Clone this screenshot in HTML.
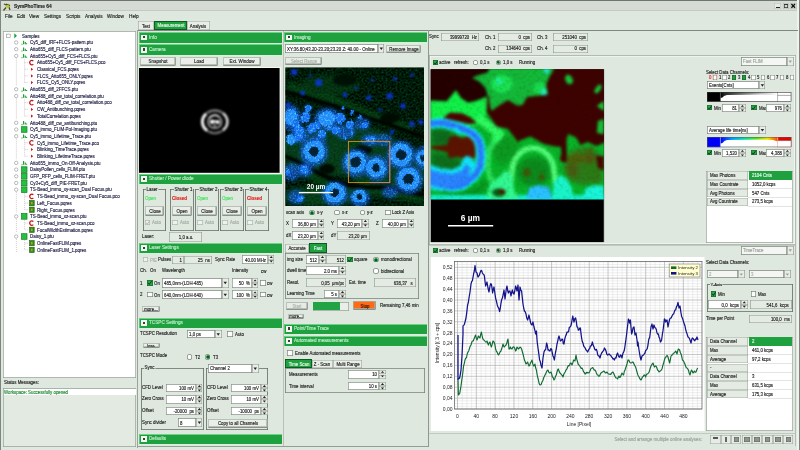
<!DOCTYPE html>
<html><head><meta charset="utf-8"><title>SymPhoTime 64</title>
<style>
html,body{margin:0;padding:0;background:#dfe8df;}
body{width:800px;height:450px;overflow:hidden;position:relative;font-family:"Liberation Sans",sans-serif;}
#w{position:absolute;left:0;top:0;width:800px;height:450px;overflow:hidden;filter:blur(0.35px);}
.a{position:absolute;}
.t{white-space:nowrap;overflow:visible;transform:scaleX(0.95);-webkit-text-stroke:0.14px currentColor;}
svg{overflow:visible;}
</style></head><body><div id="w">
<div class="a" style="left:0.0px;top:0.0px;width:800.0px;height:450.0px;background:#dfe8df;"></div>
<div class="a" style="left:0.0px;top:0.0px;width:800.0px;height:10.4px;background:#d6dcd5;"></div>
<div class="a" style="left:0.0px;top:0.0px;width:800.0px;height:1.0px;background:#6d756d;"></div>
<div class="a" style="left:0.0px;top:10.2px;width:800.0px;height:0.8px;background:#c3cac2;"></div>
<div class="a" style="left:0.0px;top:0.0px;width:1.0px;height:450.0px;background:#7d857d;"></div>
<div class="a" style="left:797.0px;top:0.0px;width:1.6px;height:450.0px;background:#eef3ee;"></div>
<div class="a" style="left:798.8px;top:0.0px;width:1.2px;height:450.0px;background:#7d857d;"></div>
<div class="a" style="left:774.4px;top:2.8px;width:6.8px;height:5.8px;background:#e4e9e3;box-shadow:inset 0 0 0 0.5px #b4bbb3;"></div>
<div class="a" style="left:775.6px;top:7.0px;width:4.4px;height:1.0px;background:#222;"></div>
<div class="a" style="left:782.8px;top:2.8px;width:6.2px;height:5.8px;background:#d4dad3;box-shadow:inset 0 0 0 0.5px #b4bbb3;"></div>
<div class="a" style="left:783.8px;top:3.8px;width:4.4px;height:3.8px;box-shadow:inset 0 0 0 0.7px #333;"></div>
<div class="a" style="left:783.8px;top:3.8px;width:4.4px;height:1.2px;background:#333;"></div>
<div class="a" style="left:790.4px;top:2.8px;width:6.4px;height:5.8px;background:#d4dad3;box-shadow:inset 0 0 0 0.5px #b4bbb3;"></div>
<svg class="a" style="left:790.4px;top:2.8px" width="6.4" height="5.8"><path d="M1.4 1 L5 4.8 M5 1 L1.4 4.8" stroke="#111" stroke-width="1.3"/></svg>
<svg class="a" style="left:2.5px;top:2.5px" width="8" height="8"><rect width="8" height="8" fill="#c8cf5a" opacity="0.0"/><path d="M0.5 7.5 L3 4.5 M1 1 L5.5 3 L7 7 M3 1.2 L7 2.5" stroke="#4a5010" stroke-width="1.3" fill="none"/><circle cx="4.6" cy="3.4" r="1.7" fill="#bcc83a"/></svg>
<div class="a t" style="top:2.8px;height:6.7px;line-height:6.7px;font-size:5.16px;color:#222;font-weight:bold;left:13.6px;transform-origin:0 50%;">SymPhoTime 64</div>
<div class="a t" style="top:13.2px;height:6.5px;line-height:6.5px;font-size:4.99px;color:#1c1c1c;left:5.0px;transform-origin:0 50%;">File</div>
<div class="a t" style="top:13.2px;height:6.5px;line-height:6.5px;font-size:4.99px;color:#1c1c1c;left:17.0px;transform-origin:0 50%;">Edit</div>
<div class="a t" style="top:13.2px;height:6.5px;line-height:6.5px;font-size:4.99px;color:#1c1c1c;left:29.0px;transform-origin:0 50%;">View</div>
<div class="a t" style="top:13.2px;height:6.5px;line-height:6.5px;font-size:4.99px;color:#1c1c1c;left:44.0px;transform-origin:0 50%;">Settings</div>
<div class="a t" style="top:13.2px;height:6.5px;line-height:6.5px;font-size:4.99px;color:#1c1c1c;left:66.0px;transform-origin:0 50%;">Scripts</div>
<div class="a t" style="top:13.2px;height:6.5px;line-height:6.5px;font-size:4.99px;color:#1c1c1c;left:84.5px;transform-origin:0 50%;">Analysis</div>
<div class="a t" style="top:13.2px;height:6.5px;line-height:6.5px;font-size:4.99px;color:#1c1c1c;left:106.5px;transform-origin:0 50%;">Window</div>
<div class="a t" style="top:13.2px;height:6.5px;line-height:6.5px;font-size:4.99px;color:#1c1c1c;left:129.0px;transform-origin:0 50%;">Help</div>
<div class="a" style="left:3.0px;top:31.0px;width:133.3px;height:347.3px;background:#ffffff;box-shadow:inset 0 0 0 0.7px #98a198;"></div>
<div class="a t" style="top:33.5px;height:6.1px;line-height:6.1px;font-size:4.73px;color:#1a1a40;left:21.8px;transform-origin:0 50%;">Samples</div>
<div class="a t" style="top:40.2px;height:6.1px;line-height:6.1px;font-size:4.73px;color:#1a1a40;left:29.6px;transform-origin:0 50%;">Cy5_diff_IRF+FLCS-pattern.ptu</div>
<div class="a t" style="top:46.9px;height:6.1px;line-height:6.1px;font-size:4.73px;color:#1a1a40;left:29.6px;transform-origin:0 50%;">Atto655_diff_FLCS-pattern.ptu</div>
<div class="a t" style="top:53.6px;height:6.1px;line-height:6.1px;font-size:4.73px;color:#1a1a40;left:29.6px;transform-origin:0 50%;">Atto655+Cy5_diff_FCS+FLCS.ptu</div>
<div class="a t" style="top:60.3px;height:6.1px;line-height:6.1px;font-size:4.73px;color:#1a1a40;left:37.2px;transform-origin:0 50%;">Atto655+Cy5_diff_FCS+FLCS.pco</div>
<div class="a t" style="top:67.0px;height:6.1px;line-height:6.1px;font-size:4.73px;color:#1a1a40;left:37.2px;transform-origin:0 50%;">Classical_FCS.pqres</div>
<div class="a t" style="top:73.7px;height:6.1px;line-height:6.1px;font-size:4.73px;color:#1a1a40;left:37.2px;transform-origin:0 50%;">FLCS_Atto655_ONLY.pqres</div>
<div class="a t" style="top:80.4px;height:6.1px;line-height:6.1px;font-size:4.73px;color:#1a1a40;left:37.2px;transform-origin:0 50%;">FLCS_Cy5_ONLY.pqres</div>
<div class="a t" style="top:87.0px;height:6.1px;line-height:6.1px;font-size:4.73px;color:#1a1a40;left:29.6px;transform-origin:0 50%;">Atto655_diff_2FFCS.ptu</div>
<div class="a t" style="top:93.7px;height:6.1px;line-height:6.1px;font-size:4.73px;color:#1a1a40;left:29.6px;transform-origin:0 50%;">Atto488_diff_cw_total_correlation.ptu</div>
<div class="a t" style="top:100.4px;height:6.1px;line-height:6.1px;font-size:4.73px;color:#1a1a40;left:37.2px;transform-origin:0 50%;">Atto488_diff_cw_total_correlation.pco</div>
<div class="a t" style="top:107.1px;height:6.1px;line-height:6.1px;font-size:4.73px;color:#1a1a40;left:37.2px;transform-origin:0 50%;">CW_Antibunching.pqres</div>
<div class="a t" style="top:113.8px;height:6.1px;line-height:6.1px;font-size:4.73px;color:#1a1a40;left:37.2px;transform-origin:0 50%;">TotalCorrelation.pqres</div>
<div class="a t" style="top:120.5px;height:6.1px;line-height:6.1px;font-size:4.73px;color:#1a1a40;left:29.6px;transform-origin:0 50%;">Atto488_diff_cw_antibunching.ptu</div>
<div class="a t" style="top:127.2px;height:6.1px;line-height:6.1px;font-size:4.73px;color:#1a1a40;left:29.6px;transform-origin:0 50%;">Cy5_immo_FLIM-Pol-Imaging.ptu</div>
<div class="a t" style="top:133.9px;height:6.1px;line-height:6.1px;font-size:4.73px;color:#1a1a40;left:29.6px;transform-origin:0 50%;">Cy5_immo_Lifetime_Trace.ptu</div>
<div class="a t" style="top:140.6px;height:6.1px;line-height:6.1px;font-size:4.73px;color:#1a1a40;left:37.2px;transform-origin:0 50%;">Cy5_immo_Lifetime_Trace.pco</div>
<div class="a t" style="top:147.3px;height:6.1px;line-height:6.1px;font-size:4.73px;color:#1a1a40;left:37.2px;transform-origin:0 50%;">Blinking_TimeTrace.pqres</div>
<div class="a t" style="top:153.9px;height:6.1px;line-height:6.1px;font-size:4.73px;color:#1a1a40;left:37.2px;transform-origin:0 50%;">Blinking_LifetimeTrace.pqres</div>
<div class="a t" style="top:160.6px;height:6.1px;line-height:6.1px;font-size:4.73px;color:#1a1a40;left:29.6px;transform-origin:0 50%;">Atto655_immo_On-Off-Analysis.ptu</div>
<div class="a t" style="top:167.3px;height:6.1px;line-height:6.1px;font-size:4.73px;color:#1a1a40;left:29.6px;transform-origin:0 50%;">DaisyPollen_cells_FLIM.ptu</div>
<div class="a t" style="top:174.0px;height:6.1px;line-height:6.1px;font-size:4.73px;color:#1a1a40;left:29.6px;transform-origin:0 50%;">GFP_RFP_cells_FLIM-FRET.ptu</div>
<div class="a t" style="top:180.7px;height:6.1px;line-height:6.1px;font-size:4.73px;color:#1a1a40;left:29.6px;transform-origin:0 50%;">Cy3+Cy5_diff_PIE-FRET.ptu</div>
<div class="a t" style="top:187.4px;height:6.1px;line-height:6.1px;font-size:4.73px;color:#1a1a40;left:29.6px;transform-origin:0 50%;">TS-Bead_immo_xy-scan_Dual Focus.ptu</div>
<div class="a t" style="top:194.1px;height:6.1px;line-height:6.1px;font-size:4.73px;color:#1a1a40;left:37.2px;transform-origin:0 50%;">TS-Bead_immo_xy-scan_Dual Focus.pco</div>
<div class="a t" style="top:200.8px;height:6.1px;line-height:6.1px;font-size:4.73px;color:#1a1a40;left:37.2px;transform-origin:0 50%;">Left_Focus.pqres</div>
<div class="a t" style="top:207.5px;height:6.1px;line-height:6.1px;font-size:4.73px;color:#1a1a40;left:37.2px;transform-origin:0 50%;">Right_Focus.pqres</div>
<div class="a t" style="top:214.2px;height:6.1px;line-height:6.1px;font-size:4.73px;color:#1a1a40;left:29.6px;transform-origin:0 50%;">TS-Bead_immo_xz-scan.ptu</div>
<div class="a t" style="top:220.8px;height:6.1px;line-height:6.1px;font-size:4.73px;color:#1a1a40;left:37.2px;transform-origin:0 50%;">TS-Bead_immo_xz-scan.pco</div>
<div class="a t" style="top:227.5px;height:6.1px;line-height:6.1px;font-size:4.73px;color:#1a1a40;left:37.2px;transform-origin:0 50%;">FocalWidthEstimation.pqres</div>
<div class="a t" style="top:234.2px;height:6.1px;line-height:6.1px;font-size:4.73px;color:#1a1a40;left:29.6px;transform-origin:0 50%;">Daisy_1.ptu</div>
<div class="a t" style="top:240.9px;height:6.1px;line-height:6.1px;font-size:4.73px;color:#1a1a40;left:37.2px;transform-origin:0 50%;">OnlineFastFLIM.pqres</div>
<div class="a t" style="top:247.6px;height:6.1px;line-height:6.1px;font-size:4.73px;color:#1a1a40;left:37.2px;transform-origin:0 50%;">OnlineFastFLIM_1.pqres</div>
<svg class="a" style="left:0;top:0" width="140" height="260"><rect x="6.6" y="34.1" width="3.6" height="3.4" fill="#fff" stroke="#8a908a" stroke-width="0.6"/><path d="M14.3 33.2 L16.9 35.8 L14.3 38.4Z" fill="#18a034"/><circle cx="16.2" cy="42.5" r="1.7" fill="#fff" stroke="#8a908a" stroke-width="0.6"/><path d="M21.5 44.3 h1 M23.6 44.3 v-3.6 M25.3 44.3 v-2.2 M26.6 44.3 v-1" stroke="#1c9a30" stroke-width="1.1" fill="none"/><circle cx="16.2" cy="49.2" r="1.7" fill="#fff" stroke="#8a908a" stroke-width="0.6"/><path d="M21.5 51.0 h1 M23.6 51.0 v-3.6 M25.3 51.0 v-2.2 M26.6 51.0 v-1" stroke="#1c9a30" stroke-width="1.1" fill="none"/><circle cx="16.2" cy="55.9" r="1.7" fill="#fff" stroke="#8a908a" stroke-width="0.6"/><path d="M21.5 57.7 h1 M23.6 57.7 v-3.6 M25.3 57.7 v-2.2 M26.6 57.7 v-1" stroke="#1c9a30" stroke-width="1.1" fill="none"/><path d="M33.3 61.1 a2 2.3 0 1 0 0 3" stroke="#c41818" stroke-width="1.2" fill="none"/><path d="M31 67.7 L33.2 69.2 L31 70.8Z" fill="#d01818"/><path d="M31 74.3 L33.2 75.9 L31 77.5Z" fill="#d01818"/><path d="M31 81.0 L33.2 82.6 L31 84.2Z" fill="#d01818"/><circle cx="16.2" cy="89.3" r="1.7" fill="#fff" stroke="#8a908a" stroke-width="0.6"/><path d="M21.5 91.1 h1 M23.6 91.1 v-3.6 M25.3 91.1 v-2.2 M26.6 91.1 v-1" stroke="#1c9a30" stroke-width="1.1" fill="none"/><circle cx="16.2" cy="96.0" r="1.7" fill="#fff" stroke="#8a908a" stroke-width="0.6"/><path d="M21.5 97.8 h1 M23.6 97.8 v-3.6 M25.3 97.8 v-2.2 M26.6 97.8 v-1" stroke="#1c9a30" stroke-width="1.1" fill="none"/><path d="M33.3 101.2 a2 2.3 0 1 0 0 3" stroke="#c41818" stroke-width="1.2" fill="none"/><path d="M31 107.8 L33.2 109.4 L31 111.0Z" fill="#d01818"/><path d="M31 114.5 L33.2 116.1 L31 117.7Z" fill="#d01818"/><circle cx="16.2" cy="122.8" r="1.7" fill="#fff" stroke="#8a908a" stroke-width="0.6"/><path d="M21.5 124.6 h1 M23.6 124.6 v-3.6 M25.3 124.6 v-2.2 M26.6 124.6 v-1" stroke="#1c9a30" stroke-width="1.1" fill="none"/><circle cx="16.2" cy="129.5" r="1.7" fill="#fff" stroke="#8a908a" stroke-width="0.6"/><rect x="21.6" y="126.7" width="5.4" height="5.6" fill="#22c23c" stroke="#157a28" stroke-width="0.7"/><circle cx="16.2" cy="136.2" r="1.7" fill="#fff" stroke="#8a908a" stroke-width="0.6"/><path d="M21.5 138.0 h1 M23.6 138.0 v-3.6 M25.3 138.0 v-2.2 M26.6 138.0 v-1" stroke="#1c9a30" stroke-width="1.1" fill="none"/><path d="M33.3 141.3 a2 2.3 0 1 0 0 3" stroke="#c41818" stroke-width="1.2" fill="none"/><path d="M31 147.9 L33.2 149.5 L31 151.1Z" fill="#d01818"/><path d="M31 154.6 L33.2 156.2 L31 157.8Z" fill="#d01818"/><circle cx="16.2" cy="162.9" r="1.7" fill="#fff" stroke="#8a908a" stroke-width="0.6"/><path d="M21.5 164.7 h1 M23.6 164.7 v-3.6 M25.3 164.7 v-2.2 M26.6 164.7 v-1" stroke="#1c9a30" stroke-width="1.1" fill="none"/><circle cx="16.2" cy="169.6" r="1.7" fill="#fff" stroke="#8a908a" stroke-width="0.6"/><rect x="21.6" y="166.8" width="5.4" height="5.6" fill="#22c23c" stroke="#157a28" stroke-width="0.7"/><circle cx="16.2" cy="176.3" r="1.7" fill="#fff" stroke="#8a908a" stroke-width="0.6"/><rect x="21.6" y="173.5" width="5.4" height="5.6" fill="#22c23c" stroke="#157a28" stroke-width="0.7"/><circle cx="16.2" cy="183.0" r="1.7" fill="#fff" stroke="#8a908a" stroke-width="0.6"/><rect x="21.6" y="180.2" width="5.4" height="5.6" fill="#22c23c" stroke="#157a28" stroke-width="0.7"/><circle cx="16.2" cy="189.7" r="1.7" fill="#fff" stroke="#8a908a" stroke-width="0.6"/><rect x="21.6" y="186.9" width="5.4" height="5.6" fill="#22c23c" stroke="#157a28" stroke-width="0.7"/><path d="M33.3 194.9 a2 2.3 0 1 0 0 3" stroke="#c41818" stroke-width="1.2" fill="none"/><rect x="29.6" y="200.5" width="4.6" height="5.2" fill="#2f8f1a" stroke="#1d5a10" stroke-width="0.6"/><rect x="31" y="201.9" width="1.6" height="2.4" fill="#b8a020"/><rect x="29.6" y="207.1" width="4.6" height="5.2" fill="#2f8f1a" stroke="#1d5a10" stroke-width="0.6"/><rect x="31" y="208.5" width="1.6" height="2.4" fill="#b8a020"/><circle cx="16.2" cy="216.4" r="1.7" fill="#fff" stroke="#8a908a" stroke-width="0.6"/><rect x="21.6" y="213.6" width="5.4" height="5.6" fill="#22c23c" stroke="#157a28" stroke-width="0.7"/><path d="M33.3 221.6 a2 2.3 0 1 0 0 3" stroke="#c41818" stroke-width="1.2" fill="none"/><rect x="29.6" y="227.2" width="4.6" height="5.2" fill="#2f8f1a" stroke="#1d5a10" stroke-width="0.6"/><rect x="31" y="228.6" width="1.6" height="2.4" fill="#b8a020"/><circle cx="16.2" cy="236.5" r="1.7" fill="#fff" stroke="#8a908a" stroke-width="0.6"/><rect x="21.6" y="233.7" width="5.4" height="5.6" fill="#22c23c" stroke="#157a28" stroke-width="0.7"/><rect x="29.6" y="240.6" width="4.6" height="5.2" fill="#2f8f1a" stroke="#1d5a10" stroke-width="0.6"/><rect x="31" y="242.0" width="1.6" height="2.4" fill="#b8a020"/><rect x="29.6" y="247.3" width="4.6" height="5.2" fill="#2f8f1a" stroke="#1d5a10" stroke-width="0.6"/><rect x="31" y="248.7" width="1.6" height="2.4" fill="#b8a020"/><path d="M16.4 58.4 V85.6" stroke="#b8a8a8" stroke-width="0.6" stroke-dasharray="1 1"/><path d="M24.6 59.4 V82.6" stroke="#b8a8a8" stroke-width="0.6" stroke-dasharray="1 1"/><path d="M24.6 62.6 H28.2" stroke="#b8a8a8" stroke-width="0.6" stroke-dasharray="1 1"/><path d="M24.6 69.2 H28.2" stroke="#b8a8a8" stroke-width="0.6" stroke-dasharray="1 1"/><path d="M24.6 75.9 H28.2" stroke="#b8a8a8" stroke-width="0.6" stroke-dasharray="1 1"/><path d="M24.6 82.6 H28.2" stroke="#b8a8a8" stroke-width="0.6" stroke-dasharray="1 1"/><path d="M16.4 98.5 V119.1" stroke="#b8a8a8" stroke-width="0.6" stroke-dasharray="1 1"/><path d="M24.6 99.5 V116.1" stroke="#b8a8a8" stroke-width="0.6" stroke-dasharray="1 1"/><path d="M24.6 102.7 H28.2" stroke="#b8a8a8" stroke-width="0.6" stroke-dasharray="1 1"/><path d="M24.6 109.4 H28.2" stroke="#b8a8a8" stroke-width="0.6" stroke-dasharray="1 1"/><path d="M24.6 116.1 H28.2" stroke="#b8a8a8" stroke-width="0.6" stroke-dasharray="1 1"/><path d="M16.4 138.7 V159.2" stroke="#b8a8a8" stroke-width="0.6" stroke-dasharray="1 1"/><path d="M24.6 139.7 V156.2" stroke="#b8a8a8" stroke-width="0.6" stroke-dasharray="1 1"/><path d="M24.6 142.8 H28.2" stroke="#b8a8a8" stroke-width="0.6" stroke-dasharray="1 1"/><path d="M24.6 149.5 H28.2" stroke="#b8a8a8" stroke-width="0.6" stroke-dasharray="1 1"/><path d="M24.6 156.2 H28.2" stroke="#b8a8a8" stroke-width="0.6" stroke-dasharray="1 1"/><path d="M16.4 192.2 V212.7" stroke="#b8a8a8" stroke-width="0.6" stroke-dasharray="1 1"/><path d="M24.6 193.2 V209.7" stroke="#b8a8a8" stroke-width="0.6" stroke-dasharray="1 1"/><path d="M24.6 196.4 H28.2" stroke="#b8a8a8" stroke-width="0.6" stroke-dasharray="1 1"/><path d="M24.6 203.1 H28.2" stroke="#b8a8a8" stroke-width="0.6" stroke-dasharray="1 1"/><path d="M24.6 209.7 H28.2" stroke="#b8a8a8" stroke-width="0.6" stroke-dasharray="1 1"/><path d="M16.4 218.9 V232.8" stroke="#b8a8a8" stroke-width="0.6" stroke-dasharray="1 1"/><path d="M24.6 219.9 V229.8" stroke="#b8a8a8" stroke-width="0.6" stroke-dasharray="1 1"/><path d="M24.6 223.1 H28.2" stroke="#b8a8a8" stroke-width="0.6" stroke-dasharray="1 1"/><path d="M24.6 229.8 H28.2" stroke="#b8a8a8" stroke-width="0.6" stroke-dasharray="1 1"/><path d="M16.4 239.0 V252.9" stroke="#b8a8a8" stroke-width="0.6" stroke-dasharray="1 1"/><path d="M24.6 240.0 V249.9" stroke="#b8a8a8" stroke-width="0.6" stroke-dasharray="1 1"/><path d="M24.6 243.2 H28.2" stroke="#b8a8a8" stroke-width="0.6" stroke-dasharray="1 1"/><path d="M24.6 249.9 H28.2" stroke="#b8a8a8" stroke-width="0.6" stroke-dasharray="1 1"/></svg>
<div class="a t" style="top:380.3px;height:6.0px;line-height:6.0px;font-size:4.64px;color:#1c1c1c;left:3.6px;transform-origin:0 50%;">Status Messages:</div>
<div class="a" style="left:3.0px;top:388.0px;width:133.3px;height:59.0px;background:#e2eae2;box-shadow:inset 0 0 0 0.7px #98a198;"></div>
<div class="a" style="left:3.7px;top:388.8px;width:131.9px;height:6.5px;background:#ffffff;"></div>
<div class="a t" style="top:389.8px;height:6.0px;line-height:6.0px;font-size:4.59px;color:#1c8a30;left:4.2px;transform-origin:0 50%;">Workspace: Successfully opened</div>
<div class="a" style="left:137.3px;top:30.0px;width:0.8px;height:418.0px;background:#9aa39a;"></div>
<div class="a" style="left:137.5px;top:29.5px;width:660.0px;height:1.2px;background:#7f887f;"></div>
<div class="a" style="left:138.2px;top:21.2px;width:16.0px;height:8.6px;background:#e9efe8;box-shadow:inset 0 0 0 0.6px #9aa39a;"></div>
<div class="a t" style="top:23.5px;height:6.0px;line-height:6.0px;font-size:4.64px;color:#1c1c1c;left:46.2px;width:200px;text-align:center;transform-origin:50% 50%;">Test</div>
<div class="a" style="left:154.4px;top:20.8px;width:32.6px;height:9.4px;background:#1fa13f;box-shadow:inset 0 0 0 0.9px #0f5a22;"></div>
<div class="a t" style="top:23.3px;height:6.0px;line-height:6.0px;font-size:4.64px;color:#e8f8ec;left:70.7px;width:200px;text-align:center;transform-origin:50% 50%;">Measurement</div>
<div class="a" style="left:187.2px;top:21.2px;width:22.4px;height:8.6px;background:#e9efe8;box-shadow:inset 0 0 0 0.6px #9aa39a;"></div>
<div class="a t" style="top:23.5px;height:6.0px;line-height:6.0px;font-size:4.64px;color:#1c1c1c;left:98.4px;width:200px;text-align:center;transform-origin:50% 50%;">Analysis</div>
<div class="a" style="left:138.5px;top:32.3px;width:143.3px;height:10.3px;background:#1fa13f;border-top:0.8px solid #6fd088;border-left:0.7px solid #5fc878;box-sizing:border-box;"></div>
<div class="a" style="left:138.5px;top:42.6px;width:143.3px;height:1.2px;background:#d4f2da;"></div>
<div class="a" style="left:140.9px;top:34.6px;width:5.8px;height:5.8px;background:#f4f8f4;"></div>
<div class="a" style="left:142.7px;top:36.1px;width:2.2px;height:2.2px;background:#3a3f3a;"></div>
<div class="a t" style="top:34.8px;height:6.4px;line-height:6.4px;font-size:4.9px;color:#c0eecb;left:148.5px;transform-origin:0 50%;">Info</div>
<div class="a" style="left:138.5px;top:44.3px;width:143.3px;height:10.7px;background:#1fa13f;border-top:0.8px solid #6fd088;border-left:0.7px solid #5fc878;box-sizing:border-box;"></div>
<div class="a" style="left:138.5px;top:55.0px;width:143.3px;height:1.2px;background:#d4f2da;"></div>
<div class="a" style="left:140.9px;top:46.9px;width:5.8px;height:5.8px;background:#f4f8f4;"></div>
<div class="a" style="left:142.7px;top:48.4px;width:2.2px;height:2.2px;background:#3a3f3a;"></div>
<div class="a t" style="top:47.0px;height:6.4px;line-height:6.4px;font-size:4.9px;color:#c0eecb;left:148.5px;transform-origin:0 50%;">Camera</div>
<div class="a" style="left:139.6px;top:57.0px;width:36.6px;height:9.2px;background:#e9efe8;box-shadow:inset 0 0 0 0.7px #a7b0a7;border-radius:1.2px;border-bottom:0.8px solid #8a938a;border-right:0.8px solid #98a198;box-sizing:border-box;"></div>
<div class="a t" style="top:59.3px;height:6.1px;line-height:6.1px;font-size:4.73px;color:#1c1c1c;left:57.9px;width:200px;text-align:center;transform-origin:50% 50%;">Snapshot</div>
<div class="a" style="left:180.4px;top:57.0px;width:37.8px;height:9.2px;background:#e9efe8;box-shadow:inset 0 0 0 0.7px #a7b0a7;border-radius:1.2px;border-bottom:0.8px solid #8a938a;border-right:0.8px solid #98a198;box-sizing:border-box;"></div>
<div class="a t" style="top:59.3px;height:6.1px;line-height:6.1px;font-size:4.73px;color:#1c1c1c;left:99.3px;width:200px;text-align:center;transform-origin:50% 50%;">Load</div>
<div class="a" style="left:223.0px;top:57.0px;width:38.2px;height:9.2px;background:#e9efe8;box-shadow:inset 0 0 0 0.7px #a7b0a7;border-radius:1.2px;border-bottom:0.8px solid #8a938a;border-right:0.8px solid #98a198;box-sizing:border-box;"></div>
<div class="a t" style="top:59.3px;height:6.1px;line-height:6.1px;font-size:4.73px;color:#1c1c1c;left:142.1px;width:200px;text-align:center;transform-origin:50% 50%;">Ext. Window</div>
<div class="a" style="left:138.8px;top:67.2px;width:142.4px;height:106.4px;background:#f6faf6;"></div>
<svg class="a" style="left:139.2px;top:67.6px" width="140.6" height="104.8" viewBox="0 0 140.6 104.8">
<defs><filter color-interpolation-filters="sRGB" id="cb" x="-30%" y="-30%" width="160%" height="160%"><feGaussianBlur stdDeviation="0.8"/></filter></defs>
<rect width="140.6" height="104.8" fill="#000"/>
<g filter="url(#cb)" fill="none" transform="translate(75.8,53.8)">
<ellipse rx="12.8" ry="11.5" stroke="#4a4a4a" stroke-width="2.4"/>
<path d="M-8.5 -8 A11.8 10.8 0 0 0 -7.5 8.8" stroke="#ffffff" stroke-width="2.8"/>
<path d="M8 -8.6 A11.8 10.8 0 0 1 8 8.4" stroke="#e4e4e4" stroke-width="2.4"/>
<path d="M-7 -8.8 A11 10 0 0 1 7 -9" stroke="#8a8a8a" stroke-width="1.6"/>
<path d="M-6 9.4 A11 10 0 0 0 6 9.4" stroke="#7a7a7a" stroke-width="1.6"/>
<ellipse rx="6.8" ry="6.4" stroke="#a8a8a8" stroke-width="1.7"/>
<path d="M-5.8 -3.5 A6.6 6.3 0 0 1 4.4 -5" stroke="#e0e0e0" stroke-width="1.5"/>
<circle cx="-2.7" cy="0" r="2.2" fill="#ffffff" stroke="none"/>
<circle cx="3.0" cy="0.2" r="2.0" fill="#ffffff" stroke="none"/>
<circle cx="0.2" cy="-0.4" r="1.5" fill="#e0e0e0" stroke="none"/>
<circle cx="0" cy="3.8" r="1.3" fill="#a0a0a0" stroke="none"/>
</g></svg>
<div class="a" style="left:138.5px;top:173.7px;width:143.3px;height:10.3px;background:#1fa13f;border-top:0.8px solid #6fd088;border-left:0.7px solid #5fc878;box-sizing:border-box;"></div>
<div class="a" style="left:138.5px;top:184.0px;width:143.3px;height:1.2px;background:#d4f2da;"></div>
<div class="a" style="left:140.9px;top:176.1px;width:5.8px;height:5.8px;background:#f4f8f4;"></div>
<div class="a" style="left:142.7px;top:177.6px;width:2.2px;height:2.2px;background:#3a3f3a;"></div>
<div class="a t" style="top:176.2px;height:6.4px;line-height:6.4px;font-size:4.9px;color:#c0eecb;left:148.5px;transform-origin:0 50%;">Shutter / Power diode</div>
<div class="a" style="left:143.0px;top:189.0px;width:23.2px;height:41.6px;box-shadow:inset 0 0 0 0.8px #626b62;"></div>
<div class="a t" style="left:146.2px;top:186.6px;height:6.0px;line-height:6.0px;font-size:4.64px;color:#1c1c1c;background:#dfe8df;padding:0 0.6px;transform-origin:0 50%">Laser</div>
<div class="a t" style="top:195.8px;height:6.1px;line-height:6.1px;font-size:4.73px;color:#3fe25a;left:145.0px;transform-origin:0 50%;">Open</div>
<div class="a" style="left:145.0px;top:206.4px;width:19.4px;height:9.2px;background:#e9efe8;box-shadow:inset 0 0 0 0.7px #a7b0a7;border-radius:1.2px;border-bottom:0.8px solid #8a938a;border-right:0.8px solid #98a198;box-sizing:border-box;"></div>
<div class="a t" style="top:208.7px;height:6.1px;line-height:6.1px;font-size:4.73px;color:#1c1c1c;left:54.7px;width:200px;text-align:center;transform-origin:50% 50%;">Close</div>
<div class="a" style="left:145.0px;top:219.8px;width:5.4px;height:5.4px;background:#eef2ed;box-shadow:inset 0 0 0 0.7px #b0b8b0;"></div>
<svg class="a" style="left:145px;top:219.8px" width="5.4" height="5.4"><path d="M1.2 2.7 L2.3 4.2 L4.4 1.2" stroke="#a8b0a8" stroke-width="0.9" fill="none"/></svg>
<div class="a t" style="top:220.3px;height:6.0px;line-height:6.0px;font-size:4.59px;color:#a0a8a0;left:152.4px;transform-origin:0 50%;">Auto</div>
<div class="a" style="left:170.4px;top:189.0px;width:23.2px;height:41.6px;box-shadow:inset 0 0 0 0.8px #626b62;"></div>
<div class="a t" style="left:173.6px;top:186.6px;height:6.0px;line-height:6.0px;font-size:4.64px;color:#1c1c1c;background:#dfe8df;padding:0 0.6px;transform-origin:0 50%">Shutter 1</div>
<div class="a t" style="top:195.8px;height:6.1px;line-height:6.1px;font-size:4.73px;color:#e01c1c;font-weight:bold;left:172.4px;transform-origin:0 50%;">Closed</div>
<div class="a" style="left:172.4px;top:206.4px;width:19.4px;height:9.2px;background:#e9efe8;box-shadow:inset 0 0 0 0.7px #a7b0a7;border-radius:1.2px;border-bottom:0.8px solid #8a938a;border-right:0.8px solid #98a198;box-sizing:border-box;"></div>
<div class="a t" style="top:208.7px;height:6.1px;line-height:6.1px;font-size:4.73px;color:#1c1c1c;left:82.1px;width:200px;text-align:center;transform-origin:50% 50%;">Open</div>
<div class="a" style="left:172.4px;top:219.8px;width:5.4px;height:5.4px;background:#eef2ed;box-shadow:inset 0 0 0 0.7px #b0b8b0;"></div>
<div class="a t" style="top:220.3px;height:6.0px;line-height:6.0px;font-size:4.59px;color:#a0a8a0;left:179.8px;transform-origin:0 50%;">Auto</div>
<div class="a" style="left:195.4px;top:189.0px;width:23.2px;height:41.6px;box-shadow:inset 0 0 0 0.8px #626b62;"></div>
<div class="a t" style="left:198.6px;top:186.6px;height:6.0px;line-height:6.0px;font-size:4.64px;color:#1c1c1c;background:#dfe8df;padding:0 0.6px;transform-origin:0 50%">Shutter 2</div>
<div class="a t" style="top:195.8px;height:6.1px;line-height:6.1px;font-size:4.73px;color:#3fe25a;left:197.4px;transform-origin:0 50%;">Open</div>
<div class="a" style="left:197.4px;top:206.4px;width:19.4px;height:9.2px;background:#e9efe8;box-shadow:inset 0 0 0 0.7px #a7b0a7;border-radius:1.2px;border-bottom:0.8px solid #8a938a;border-right:0.8px solid #98a198;box-sizing:border-box;"></div>
<div class="a t" style="top:208.7px;height:6.1px;line-height:6.1px;font-size:4.73px;color:#1c1c1c;left:107.1px;width:200px;text-align:center;transform-origin:50% 50%;">Close</div>
<div class="a" style="left:197.4px;top:219.8px;width:5.4px;height:5.4px;background:#eef2ed;box-shadow:inset 0 0 0 0.7px #b0b8b0;"></div>
<div class="a t" style="top:220.3px;height:6.0px;line-height:6.0px;font-size:4.59px;color:#a0a8a0;left:204.8px;transform-origin:0 50%;">Auto</div>
<div class="a" style="left:220.4px;top:189.0px;width:23.2px;height:41.6px;box-shadow:inset 0 0 0 0.8px #626b62;"></div>
<div class="a t" style="left:223.6px;top:186.6px;height:6.0px;line-height:6.0px;font-size:4.64px;color:#1c1c1c;background:#dfe8df;padding:0 0.6px;transform-origin:0 50%">Shutter 3</div>
<div class="a t" style="top:195.8px;height:6.1px;line-height:6.1px;font-size:4.73px;color:#3fe25a;left:222.4px;transform-origin:0 50%;">Open</div>
<div class="a" style="left:222.4px;top:206.4px;width:19.4px;height:9.2px;background:#e9efe8;box-shadow:inset 0 0 0 0.7px #a7b0a7;border-radius:1.2px;border-bottom:0.8px solid #8a938a;border-right:0.8px solid #98a198;box-sizing:border-box;"></div>
<div class="a t" style="top:208.7px;height:6.1px;line-height:6.1px;font-size:4.73px;color:#1c1c1c;left:132.1px;width:200px;text-align:center;transform-origin:50% 50%;">Close</div>
<div class="a" style="left:222.4px;top:219.8px;width:5.4px;height:5.4px;background:#eef2ed;box-shadow:inset 0 0 0 0.7px #b0b8b0;"></div>
<div class="a t" style="top:220.3px;height:6.0px;line-height:6.0px;font-size:4.59px;color:#a0a8a0;left:229.8px;transform-origin:0 50%;">Auto</div>
<div class="a" style="left:245.4px;top:189.0px;width:23.2px;height:41.6px;box-shadow:inset 0 0 0 0.8px #626b62;"></div>
<div class="a t" style="left:248.6px;top:186.6px;height:6.0px;line-height:6.0px;font-size:4.64px;color:#1c1c1c;background:#dfe8df;padding:0 0.6px;transform-origin:0 50%">Shutter 4</div>
<div class="a t" style="top:195.8px;height:6.1px;line-height:6.1px;font-size:4.73px;color:#e01c1c;font-weight:bold;left:247.4px;transform-origin:0 50%;">Closed</div>
<div class="a" style="left:247.4px;top:206.4px;width:19.4px;height:9.2px;background:#e9efe8;box-shadow:inset 0 0 0 0.7px #a7b0a7;border-radius:1.2px;border-bottom:0.8px solid #8a938a;border-right:0.8px solid #98a198;box-sizing:border-box;"></div>
<div class="a t" style="top:208.7px;height:6.1px;line-height:6.1px;font-size:4.73px;color:#1c1c1c;left:157.1px;width:200px;text-align:center;transform-origin:50% 50%;">Open</div>
<div class="a" style="left:247.4px;top:219.8px;width:5.4px;height:5.4px;background:#eef2ed;box-shadow:inset 0 0 0 0.7px #b0b8b0;"></div>
<div class="a t" style="top:220.3px;height:6.0px;line-height:6.0px;font-size:4.59px;color:#a0a8a0;left:254.8px;transform-origin:0 50%;">Auto</div>
<div class="a t" style="top:233.9px;height:6.0px;line-height:6.0px;font-size:4.64px;color:#1c1c1c;left:142.0px;transform-origin:0 50%;">Laser:</div>
<div class="a" style="left:169.0px;top:232.4px;width:32.6px;height:9.2px;background:#e4ebe3;box-shadow:inset 0 0 0 0.6px #8d968d;"></div>
<div class="a t" style="top:234.8px;height:6.1px;line-height:6.1px;font-size:4.73px;color:#1c1c1c;left:-15.4px;width:200px;text-align:right;transform-origin:100% 50%;">1,0</div>
<div class="a t" style="top:235.1px;height:6.0px;line-height:6.0px;font-size:4.6px;color:#1c1c1c;left:186.4px;transform-origin:0 50%;">a.u.</div>
<div class="a" style="left:138.5px;top:242.9px;width:143.3px;height:10.3px;background:#1fa13f;border-top:0.8px solid #6fd088;border-left:0.7px solid #5fc878;box-sizing:border-box;"></div>
<div class="a" style="left:138.5px;top:253.2px;width:143.3px;height:1.2px;background:#d4f2da;"></div>
<div class="a" style="left:140.9px;top:245.2px;width:5.8px;height:5.8px;background:#f4f8f4;"></div>
<div class="a" style="left:142.7px;top:246.8px;width:2.2px;height:2.2px;background:#3a3f3a;"></div>
<div class="a t" style="top:245.4px;height:6.4px;line-height:6.4px;font-size:4.9px;color:#c0eecb;left:148.5px;transform-origin:0 50%;">Laser Settings</div>
<div class="a" style="left:143.0px;top:257.0px;width:5.4px;height:5.4px;background:#eef2ed;box-shadow:inset 0 0 0 0.7px #b0b8b0;"></div>
<div class="a t" style="top:257.7px;height:6.0px;line-height:6.0px;font-size:4.59px;color:#a8b0a8;left:150.4px;transform-origin:0 50%;">PIE</div>
<div class="a t" style="top:257.1px;height:6.0px;line-height:6.0px;font-size:4.64px;color:#1c1c1c;left:157.6px;transform-origin:0 50%;">Pulses</div>
<div class="a" style="left:172.0px;top:255.6px;width:12.4px;height:8.2px;background:#e4ebe3;box-shadow:inset 0 0 0 0.6px #8d968d;"></div>
<div class="a t" style="top:257.5px;height:6.1px;line-height:6.1px;font-size:4.73px;color:#1c1c1c;left:-17.6px;width:200px;text-align:right;transform-origin:100% 50%;">1</div>
<div class="a" style="left:184.4px;top:255.6px;width:27.2px;height:8.2px;background:#e4ebe3;box-shadow:inset 0 0 0 0.6px #8d968d;"></div>
<div class="a t" style="top:257.5px;height:6.1px;line-height:6.1px;font-size:4.73px;color:#1c1c1c;left:9.6px;width:200px;text-align:right;transform-origin:100% 50%;">25&nbsp; ns</div>
<div class="a t" style="top:257.1px;height:6.0px;line-height:6.0px;font-size:4.64px;color:#1c1c1c;left:215.0px;transform-origin:0 50%;">Sync Rate</div>
<div class="a" style="left:242.4px;top:255.4px;width:25.4px;height:8.6px;background:#ffffff;box-shadow:inset 0 0 0 0.7px #8a938a;"></div>
<div class="a t" style="top:257.6px;height:6.0px;line-height:6.0px;font-size:4.59px;color:#1c1c1c;left:65.8px;width:200px;text-align:right;transform-origin:100% 50%;">40.00 MHz</div>
<div class="a" style="left:267.8px;top:255.4px;width:6.5px;height:4.3px;background:#e8eee7;box-shadow:inset 0 0 0 0.5px #8a938a;"></div>
<div class="a" style="left:267.8px;top:259.7px;width:6.5px;height:4.3px;background:#e8eee7;box-shadow:inset 0 0 0 0.5px #8a938a;"></div>
<svg class="a" style="left:267.8px;top:255.4px" width="6.5" height="8.6"><path d="M1.65 3.0 L3.25 1.0999999999999996 L4.85 3.0Z M1.65 5.6 L3.25 7.5 L4.85 5.6Z" fill="#222"/></svg>
<div class="a t" style="top:268.3px;height:6.0px;line-height:6.0px;font-size:4.59px;color:#1c1c1c;left:140.0px;transform-origin:0 50%;">Ch.</div>
<div class="a t" style="top:268.3px;height:6.0px;line-height:6.0px;font-size:4.59px;color:#1c1c1c;left:150.0px;transform-origin:0 50%;">On</div>
<div class="a t" style="top:268.3px;height:6.0px;line-height:6.0px;font-size:4.59px;color:#1c1c1c;left:162.0px;transform-origin:0 50%;">Wavelength</div>
<div class="a t" style="top:268.3px;height:6.0px;line-height:6.0px;font-size:4.59px;color:#1c1c1c;left:232.4px;transform-origin:0 50%;">Intensity</div>
<div class="a t" style="top:268.5px;height:6.0px;line-height:6.0px;font-size:4.59px;color:#1c1c1c;left:260.6px;transform-origin:0 50%;">cw</div>
<div class="a t" style="top:280.5px;height:6.0px;line-height:6.0px;font-size:4.64px;color:#1c1c1c;left:140.0px;transform-origin:0 50%;">1</div>
<div class="a" style="left:147.0px;top:280.2px;width:5.6px;height:5.6px;background:#2ca448;box-shadow:inset 0 0 0 0.7px #1a7030;"></div>
<svg class="a" style="left:147.0px;top:280.2px" width="5.6" height="5.6"><path d="M1.2 2.8 L2.352 4.367999999999999 L4.6 1.232" stroke="#0a3814" stroke-width="1.0" fill="none"/></svg>
<div class="a t" style="top:281.1px;height:6.0px;line-height:6.0px;font-size:4.59px;color:#1c1c1c;left:154.4px;transform-origin:0 50%;">On</div>
<div class="a" style="left:162.4px;top:278.4px;width:59.8px;height:9.2px;background:#ffffff;box-shadow:inset 0 0 0 0.7px #7d867d;"></div>
<div class="a" style="left:222.2px;top:278.4px;width:6.5px;height:9.2px;background:#e8eee7;box-shadow:inset 0 0 0 0.6px #8a938a;"></div>
<svg class="a" style="left:222.2px;top:278.4px" width="6.5" height="9.2"><path d="M1.55 3.8 L4.95 3.8 L3.25 6.199999999999999Z" fill="#222"/></svg>
<div class="a t" style="top:280.9px;height:6.0px;line-height:6.0px;font-size:4.59px;color:#1c1c1c;left:164.4px;transform-origin:0 50%;">485,0nm-(LDH-485)</div>
<div class="a" style="left:232.4px;top:278.4px;width:19.8px;height:9.2px;background:#ffffff;box-shadow:inset 0 0 0 0.7px #8a938a;"></div>
<div class="a t" style="top:280.9px;height:6.0px;line-height:6.0px;font-size:4.59px;color:#1c1c1c;left:50.2px;width:200px;text-align:right;transform-origin:100% 50%;">50&nbsp; %</div>
<div class="a" style="left:252.2px;top:278.4px;width:6.2px;height:4.6px;background:#e8eee7;box-shadow:inset 0 0 0 0.5px #8a938a;"></div>
<div class="a" style="left:252.2px;top:283.0px;width:6.2px;height:4.6px;background:#e8eee7;box-shadow:inset 0 0 0 0.5px #8a938a;"></div>
<svg class="a" style="left:252.2px;top:278.4px" width="6.2" height="9.2"><path d="M1.5 3.3 L3.1 1.3999999999999995 L4.7 3.3Z M1.5 5.8999999999999995 L3.1 7.8 L4.7 5.8999999999999995Z" fill="#222"/></svg>
<div class="a" style="left:260.0px;top:280.0px;width:5.6px;height:5.6px;background:#ffffff;box-shadow:inset 0 0 0 0.7px #7d867d;"></div>
<div class="a t" style="top:281.1px;height:6.0px;line-height:6.0px;font-size:4.59px;color:#1c1c1c;left:267.0px;transform-origin:0 50%;">cw</div>
<div class="a t" style="top:292.1px;height:6.0px;line-height:6.0px;font-size:4.64px;color:#1c1c1c;left:140.0px;transform-origin:0 50%;">2</div>
<div class="a" style="left:147.0px;top:291.8px;width:5.6px;height:5.6px;background:#ffffff;box-shadow:inset 0 0 0 0.7px #7d867d;"></div>
<div class="a t" style="top:292.7px;height:6.0px;line-height:6.0px;font-size:4.59px;color:#1c1c1c;left:154.4px;transform-origin:0 50%;">On</div>
<div class="a" style="left:162.4px;top:290.0px;width:59.8px;height:9.2px;background:#ffffff;box-shadow:inset 0 0 0 0.7px #7d867d;"></div>
<div class="a" style="left:222.2px;top:290.0px;width:6.5px;height:9.2px;background:#e8eee7;box-shadow:inset 0 0 0 0.6px #8a938a;"></div>
<svg class="a" style="left:222.2px;top:290.0px" width="6.5" height="9.2"><path d="M1.55 3.8 L4.95 3.8 L3.25 6.199999999999999Z" fill="#222"/></svg>
<div class="a t" style="top:292.5px;height:6.0px;line-height:6.0px;font-size:4.59px;color:#1c1c1c;left:164.4px;transform-origin:0 50%;">640,0nm-(LDH-640)</div>
<div class="a" style="left:232.4px;top:290.0px;width:19.8px;height:9.2px;background:#ffffff;box-shadow:inset 0 0 0 0.7px #8a938a;"></div>
<div class="a t" style="top:292.5px;height:6.0px;line-height:6.0px;font-size:4.59px;color:#1c1c1c;left:50.2px;width:200px;text-align:right;transform-origin:100% 50%;">100&nbsp; %</div>
<div class="a" style="left:252.2px;top:290.0px;width:6.2px;height:4.6px;background:#e8eee7;box-shadow:inset 0 0 0 0.5px #8a938a;"></div>
<div class="a" style="left:252.2px;top:294.6px;width:6.2px;height:4.6px;background:#e8eee7;box-shadow:inset 0 0 0 0.5px #8a938a;"></div>
<svg class="a" style="left:252.2px;top:290.0px" width="6.2" height="9.2"><path d="M1.5 3.3 L3.1 1.3999999999999995 L4.7 3.3Z M1.5 5.8999999999999995 L3.1 7.8 L4.7 5.8999999999999995Z" fill="#222"/></svg>
<div class="a" style="left:260.0px;top:291.6px;width:5.6px;height:5.6px;background:#ffffff;box-shadow:inset 0 0 0 0.7px #7d867d;"></div>
<div class="a t" style="top:292.7px;height:6.0px;line-height:6.0px;font-size:4.59px;color:#1c1c1c;left:267.0px;transform-origin:0 50%;">cw</div>
<div class="a" style="left:142.4px;top:306.0px;width:17.2px;height:5.8px;background:#e9efe8;box-shadow:inset 0 0 0 0.7px #a7b0a7;border-radius:1.2px;border-bottom:0.8px solid #8a938a;border-right:0.8px solid #98a198;box-sizing:border-box;"></div>
<div class="a t" style="top:306.7px;height:6.0px;line-height:6.0px;font-size:4.6px;color:#1c1c1c;left:51.0px;width:200px;text-align:center;transform-origin:50% 50%;">more...</div>
<div class="a" style="left:138.5px;top:317.9px;width:143.3px;height:10.3px;background:#1fa13f;border-top:0.8px solid #6fd088;border-left:0.7px solid #5fc878;box-sizing:border-box;"></div>
<div class="a" style="left:138.5px;top:328.2px;width:143.3px;height:1.2px;background:#d4f2da;"></div>
<div class="a" style="left:140.9px;top:320.3px;width:5.8px;height:5.8px;background:#f4f8f4;"></div>
<div class="a" style="left:142.7px;top:321.8px;width:2.2px;height:2.2px;background:#3a3f3a;"></div>
<div class="a t" style="top:320.4px;height:6.4px;line-height:6.4px;font-size:4.9px;color:#c0eecb;left:148.5px;transform-origin:0 50%;">TCSPC Settings</div>
<div class="a t" style="top:331.3px;height:6.0px;line-height:6.0px;font-size:4.64px;color:#1c1c1c;left:140.0px;transform-origin:0 50%;">TCSPC Resolution</div>
<div class="a" style="left:187.0px;top:330.0px;width:28.0px;height:8.2px;background:#ffffff;box-shadow:inset 0 0 0 0.7px #7d867d;"></div>
<div class="a" style="left:215.0px;top:330.0px;width:6.5px;height:8.2px;background:#e8eee7;box-shadow:inset 0 0 0 0.6px #8a938a;"></div>
<svg class="a" style="left:215.0px;top:330.0px" width="6.5" height="8.2"><path d="M1.55 3.3 L4.95 3.3 L3.25 5.699999999999999Z" fill="#222"/></svg>
<div class="a t" style="top:332.0px;height:6.0px;line-height:6.0px;font-size:4.59px;color:#1c1c1c;left:189.0px;transform-origin:0 50%;">1,0 ps</div>
<div class="a" style="left:227.0px;top:331.2px;width:5.6px;height:5.6px;background:#ffffff;box-shadow:inset 0 0 0 0.7px #7d867d;"></div>
<div class="a t" style="top:332.1px;height:6.0px;line-height:6.0px;font-size:4.59px;color:#1c1c1c;left:235.0px;transform-origin:0 50%;">Auto</div>
<div class="a" style="left:143.0px;top:342.6px;width:16.6px;height:5.4px;background:#e9efe8;box-shadow:inset 0 0 0 0.7px #a7b0a7;border-radius:1.2px;border-bottom:0.8px solid #8a938a;border-right:0.8px solid #98a198;box-sizing:border-box;"></div>
<div class="a t" style="top:343.2px;height:5.7px;line-height:5.7px;font-size:4.4px;color:#1c1c1c;left:51.3px;width:200px;text-align:center;transform-origin:50% 50%;">less</div>
<div class="a t" style="top:353.3px;height:6.0px;line-height:6.0px;font-size:4.64px;color:#1c1c1c;left:140.0px;transform-origin:0 50%;">TCSPC Mode</div>
<div class="a" style="left:186.7px;top:354.3px;width:5.8px;height:5.8px;background:#ffffff;box-shadow:inset 0 0 0 0.7px #7d867d;border-radius:2.9px;"></div>
<div class="a t" style="top:354.9px;height:6.0px;line-height:6.0px;font-size:4.59px;color:#1c1c1c;left:194.6px;transform-origin:0 50%;">T2</div>
<div class="a" style="left:204.7px;top:354.3px;width:5.8px;height:5.8px;background:#ffffff;box-shadow:inset 0 0 0 0.7px #7d867d;border-radius:2.9px;"></div>
<div class="a" style="left:205.5px;top:355.1px;width:4.2px;height:4.2px;background:#1a8a35;border-radius:2.9px;"></div>
<div class="a" style="left:206.6px;top:356.2px;width:2.0px;height:2.0px;background:#0a4a1a;border-radius:1px;"></div>
<div class="a t" style="top:354.9px;height:6.0px;line-height:6.0px;font-size:4.59px;color:#1c1c1c;left:212.6px;transform-origin:0 50%;">T3</div>
<div class="a" style="left:141.0px;top:367.6px;width:62.6px;height:62.8px;box-shadow:inset 0 0 0 0.8px #626b62;"></div>
<div class="a t" style="left:144.0px;top:365.1px;height:6.1px;line-height:6.1px;font-size:4.73px;color:#1c1c1c;background:#dfe8df;padding:0 0.6px;transform-origin:0 50%">Sync</div>
<div class="a" style="left:205.6px;top:367.6px;width:62.8px;height:62.8px;box-shadow:inset 0 0 0 0.8px #626b62;"></div>
<div class="a" style="left:207.6px;top:364.0px;width:44.6px;height:8.6px;background:#ffffff;box-shadow:inset 0 0 0 0.7px #7d867d;"></div>
<div class="a" style="left:252.2px;top:364.0px;width:6.5px;height:8.6px;background:#e8eee7;box-shadow:inset 0 0 0 0.6px #8a938a;"></div>
<svg class="a" style="left:252.2px;top:364.0px" width="6.5" height="8.6"><path d="M1.55 3.5 L4.95 3.5 L3.25 5.9Z" fill="#222"/></svg>
<div class="a t" style="top:366.2px;height:6.0px;line-height:6.0px;font-size:4.59px;color:#1c1c1c;left:209.6px;transform-origin:0 50%;">Channel 2</div>
<div class="a t" style="top:384.9px;height:6.0px;line-height:6.0px;font-size:4.64px;color:#1c1c1c;left:141.8px;transform-origin:0 50%;">CFD Level</div>
<div class="a" style="left:166.0px;top:383.6px;width:29.6px;height:8.6px;background:#ffffff;box-shadow:inset 0 0 0 0.7px #8a938a;"></div>
<div class="a t" style="top:385.8px;height:6.0px;line-height:6.0px;font-size:4.59px;color:#1c1c1c;left:-6.4px;width:200px;text-align:right;transform-origin:100% 50%;">100 mV</div>
<div class="a" style="left:195.6px;top:383.6px;width:6.8px;height:4.3px;background:#e8eee7;box-shadow:inset 0 0 0 0.5px #8a938a;"></div>
<div class="a" style="left:195.6px;top:387.9px;width:6.8px;height:4.3px;background:#e8eee7;box-shadow:inset 0 0 0 0.5px #8a938a;"></div>
<svg class="a" style="left:195.6px;top:383.6px" width="6.8" height="8.6"><path d="M1.7999999999999998 3.0 L3.4 1.0999999999999996 L5.0 3.0Z M1.7999999999999998 5.6 L3.4 7.5 L5.0 5.6Z" fill="#222"/></svg>
<div class="a t" style="top:384.9px;height:6.0px;line-height:6.0px;font-size:4.64px;color:#1c1c1c;left:206.6px;transform-origin:0 50%;">CFD Level</div>
<div class="a" style="left:231.0px;top:383.6px;width:30.0px;height:8.6px;background:#ffffff;box-shadow:inset 0 0 0 0.7px #8a938a;"></div>
<div class="a t" style="top:385.8px;height:6.0px;line-height:6.0px;font-size:4.59px;color:#1c1c1c;left:59.0px;width:200px;text-align:right;transform-origin:100% 50%;">100 mV</div>
<div class="a" style="left:261.0px;top:383.6px;width:6.8px;height:4.3px;background:#e8eee7;box-shadow:inset 0 0 0 0.5px #8a938a;"></div>
<div class="a" style="left:261.0px;top:387.9px;width:6.8px;height:4.3px;background:#e8eee7;box-shadow:inset 0 0 0 0.5px #8a938a;"></div>
<svg class="a" style="left:261.0px;top:383.6px" width="6.8" height="8.6"><path d="M1.7999999999999998 3.0 L3.4 1.0999999999999996 L5.0 3.0Z M1.7999999999999998 5.6 L3.4 7.5 L5.0 5.6Z" fill="#222"/></svg>
<div class="a t" style="top:396.3px;height:6.0px;line-height:6.0px;font-size:4.64px;color:#1c1c1c;left:141.8px;transform-origin:0 50%;">Zero Cross</div>
<div class="a" style="left:166.0px;top:395.0px;width:29.6px;height:8.6px;background:#ffffff;box-shadow:inset 0 0 0 0.7px #8a938a;"></div>
<div class="a t" style="top:397.2px;height:6.0px;line-height:6.0px;font-size:4.59px;color:#1c1c1c;left:-6.4px;width:200px;text-align:right;transform-origin:100% 50%;">10 mV</div>
<div class="a" style="left:195.6px;top:395.0px;width:6.8px;height:4.3px;background:#e8eee7;box-shadow:inset 0 0 0 0.5px #8a938a;"></div>
<div class="a" style="left:195.6px;top:399.3px;width:6.8px;height:4.3px;background:#e8eee7;box-shadow:inset 0 0 0 0.5px #8a938a;"></div>
<svg class="a" style="left:195.6px;top:395.0px" width="6.8" height="8.6"><path d="M1.7999999999999998 3.0 L3.4 1.0999999999999996 L5.0 3.0Z M1.7999999999999998 5.6 L3.4 7.5 L5.0 5.6Z" fill="#222"/></svg>
<div class="a t" style="top:396.3px;height:6.0px;line-height:6.0px;font-size:4.64px;color:#1c1c1c;left:206.6px;transform-origin:0 50%;">Zero Cross</div>
<div class="a" style="left:231.0px;top:395.0px;width:30.0px;height:8.6px;background:#ffffff;box-shadow:inset 0 0 0 0.7px #8a938a;"></div>
<div class="a t" style="top:397.2px;height:6.0px;line-height:6.0px;font-size:4.59px;color:#1c1c1c;left:59.0px;width:200px;text-align:right;transform-origin:100% 50%;">10 mV</div>
<div class="a" style="left:261.0px;top:395.0px;width:6.8px;height:4.3px;background:#e8eee7;box-shadow:inset 0 0 0 0.5px #8a938a;"></div>
<div class="a" style="left:261.0px;top:399.3px;width:6.8px;height:4.3px;background:#e8eee7;box-shadow:inset 0 0 0 0.5px #8a938a;"></div>
<svg class="a" style="left:261.0px;top:395.0px" width="6.8" height="8.6"><path d="M1.7999999999999998 3.0 L3.4 1.0999999999999996 L5.0 3.0Z M1.7999999999999998 5.6 L3.4 7.5 L5.0 5.6Z" fill="#222"/></svg>
<div class="a t" style="top:407.9px;height:6.0px;line-height:6.0px;font-size:4.64px;color:#1c1c1c;left:141.8px;transform-origin:0 50%;">Offset</div>
<div class="a" style="left:166.0px;top:406.6px;width:29.6px;height:8.6px;background:#ffffff;box-shadow:inset 0 0 0 0.7px #8a938a;"></div>
<div class="a t" style="top:408.8px;height:6.0px;line-height:6.0px;font-size:4.59px;color:#1c1c1c;left:-6.4px;width:200px;text-align:right;transform-origin:100% 50%;">-20000&nbsp; ps</div>
<div class="a" style="left:195.6px;top:406.6px;width:6.8px;height:4.3px;background:#e8eee7;box-shadow:inset 0 0 0 0.5px #8a938a;"></div>
<div class="a" style="left:195.6px;top:410.9px;width:6.8px;height:4.3px;background:#e8eee7;box-shadow:inset 0 0 0 0.5px #8a938a;"></div>
<svg class="a" style="left:195.6px;top:406.6px" width="6.8" height="8.6"><path d="M1.7999999999999998 3.0 L3.4 1.0999999999999996 L5.0 3.0Z M1.7999999999999998 5.6 L3.4 7.5 L5.0 5.6Z" fill="#222"/></svg>
<div class="a t" style="top:407.9px;height:6.0px;line-height:6.0px;font-size:4.64px;color:#1c1c1c;left:206.6px;transform-origin:0 50%;">Offset</div>
<div class="a" style="left:231.0px;top:406.6px;width:30.0px;height:8.6px;background:#ffffff;box-shadow:inset 0 0 0 0.7px #8a938a;"></div>
<div class="a t" style="top:408.8px;height:6.0px;line-height:6.0px;font-size:4.59px;color:#1c1c1c;left:59.0px;width:200px;text-align:right;transform-origin:100% 50%;">-10000&nbsp; ps</div>
<div class="a" style="left:261.0px;top:406.6px;width:6.8px;height:4.3px;background:#e8eee7;box-shadow:inset 0 0 0 0.5px #8a938a;"></div>
<div class="a" style="left:261.0px;top:410.9px;width:6.8px;height:4.3px;background:#e8eee7;box-shadow:inset 0 0 0 0.5px #8a938a;"></div>
<svg class="a" style="left:261.0px;top:406.6px" width="6.8" height="8.6"><path d="M1.7999999999999998 3.0 L3.4 1.0999999999999996 L5.0 3.0Z M1.7999999999999998 5.6 L3.4 7.5 L5.0 5.6Z" fill="#222"/></svg>
<div class="a t" style="top:419.7px;height:6.0px;line-height:6.0px;font-size:4.64px;color:#1c1c1c;left:141.8px;transform-origin:0 50%;">Sync divider</div>
<div class="a" style="left:178.4px;top:418.4px;width:17.2px;height:8.6px;background:#ffffff;box-shadow:inset 0 0 0 0.7px #7d867d;"></div>
<div class="a" style="left:195.6px;top:418.4px;width:6.8px;height:8.6px;background:#e8eee7;box-shadow:inset 0 0 0 0.6px #8a938a;"></div>
<svg class="a" style="left:195.6px;top:418.4px" width="6.8" height="8.6"><path d="M1.7 3.5 L5.1 3.5 L3.4 5.9Z" fill="#222"/></svg>
<div class="a t" style="top:420.6px;height:6.0px;line-height:6.0px;font-size:4.59px;color:#1c1c1c;left:180.4px;transform-origin:0 50%;">8</div>
<div class="a" style="left:207.6px;top:419.0px;width:60.0px;height:9.0px;background:#e9efe8;box-shadow:inset 0 0 0 0.7px #a7b0a7;border-radius:1.2px;border-bottom:0.8px solid #8a938a;border-right:0.8px solid #98a198;box-sizing:border-box;"></div>
<div class="a t" style="top:421.3px;height:6.0px;line-height:6.0px;font-size:4.59px;color:#1c1c1c;left:137.6px;width:200px;text-align:center;transform-origin:50% 50%;">Copy to all Channels</div>
<div class="a" style="left:138.5px;top:433.7px;width:143.3px;height:10.5px;background:#1fa13f;border-top:0.8px solid #6fd088;border-left:0.7px solid #5fc878;box-sizing:border-box;"></div>
<div class="a" style="left:138.5px;top:444.2px;width:143.3px;height:1.2px;background:#d4f2da;"></div>
<div class="a" style="left:140.9px;top:436.2px;width:5.8px;height:5.8px;background:#f4f8f4;"></div>
<div class="a" style="left:142.7px;top:437.7px;width:2.2px;height:2.2px;background:#3a3f3a;"></div>
<div class="a t" style="top:436.3px;height:6.4px;line-height:6.4px;font-size:4.9px;color:#c0eecb;left:148.5px;transform-origin:0 50%;">Defaults</div>
<div class="a" style="left:138.0px;top:446.3px;width:290.0px;height:0.9px;background:#959e95;"></div>
<div class="a" style="left:283.0px;top:31.0px;width:0.8px;height:415.0px;background:#b8c0b7;"></div>
<div class="a" style="left:283.9px;top:32.3px;width:143.1px;height:10.1px;background:#1fa13f;border-top:0.8px solid #6fd088;border-left:0.7px solid #5fc878;box-sizing:border-box;"></div>
<div class="a" style="left:283.9px;top:42.4px;width:143.1px;height:1.2px;background:#d4f2da;"></div>
<div class="a" style="left:286.3px;top:34.5px;width:5.8px;height:5.8px;background:#f4f8f4;"></div>
<div class="a" style="left:288.1px;top:36.0px;width:2.2px;height:2.2px;background:#3a3f3a;"></div>
<div class="a t" style="top:34.7px;height:6.4px;line-height:6.4px;font-size:4.9px;color:#c0eecb;left:293.9px;transform-origin:0 50%;">Imaging</div>
<div class="a" style="left:285.0px;top:44.4px;width:92.6px;height:8.6px;background:#ffffff;box-shadow:inset 0 0 0 0.7px #7d867d;"></div>
<div class="a" style="left:377.6px;top:44.4px;width:6.6px;height:8.6px;background:#e8eee7;box-shadow:inset 0 0 0 0.6px #8a938a;"></div>
<svg class="a" style="left:377.6px;top:44.4px" width="6.6" height="8.6"><path d="M1.5999999999999999 3.5 L5.0 3.5 L3.3 5.9Z" fill="#222"/></svg>
<div class="a t" style="top:46.6px;height:6.0px;line-height:6.0px;font-size:4.59px;color:#1c1c1c;left:287.0px;transform-origin:0 50%;">XY:36.80;43.20-23.20;23.20 Z: 40.00 - Online</div>
<div class="a" style="left:386.0px;top:45.0px;width:35.0px;height:8.2px;background:#e9efe8;box-shadow:inset 0 0 0 0.7px #a7b0a7;border-radius:1.2px;border-bottom:0.8px solid #8a938a;border-right:0.8px solid #98a198;box-sizing:border-box;"></div>
<div class="a t" style="top:46.9px;height:6.0px;line-height:6.0px;font-size:4.59px;color:#1c1c1c;left:303.5px;width:200px;text-align:center;transform-origin:50% 50%;">Remove Image</div>
<div class="a" style="left:285.4px;top:56.6px;width:36.2px;height:8.4px;background:#e6ece5;box-shadow:inset 0 0 0 0.7px #a7b0a7;border-radius:1.2px;border-bottom:0.8px solid #8a938a;border-right:0.8px solid #98a198;box-sizing:border-box;"></div>
<div class="a t" style="top:58.6px;height:6.0px;line-height:6.0px;font-size:4.59px;color:#a8b0a8;left:203.5px;width:200px;text-align:center;transform-origin:50% 50%;">Select Range</div>
<svg class="a" style="left:0;top:0;font-family:'Liberation Sans',sans-serif" width="800" height="450"><defs><clipPath id="c1"><rect x="285.4" y="67.6" width="138.6" height="138.4"/></clipPath><filter color-interpolation-filters="sRGB" id="b1" x="-10%" y="-10%" width="120%" height="120%"><feGaussianBlur stdDeviation="0.9"/></filter><filter color-interpolation-filters="sRGB" id="b1b" x="-10%" y="-10%" width="120%" height="120%"><feGaussianBlur stdDeviation="2.2"/></filter><filter color-interpolation-filters="sRGB" id="nz1" x="0" y="0" width="100%" height="100%"><feTurbulence type="fractalNoise" baseFrequency="0.5" numOctaves="2" seed="11"/><feColorMatrix values="0 0 0 0 0  0.44 0 0 0 -0.115  0.22 0 0 0 -0.075  0 0 0 0 1"/></filter><filter color-interpolation-filters="sRGB" id="rough" x="0" y="0" width="100%" height="100%"><feTurbulence type="fractalNoise" baseFrequency="0.28" numOctaves="2" seed="5" result="t"/><feDisplacementMap in="SourceGraphic" in2="t" scale="5" xChannelSelector="R" yChannelSelector="G"/><feGaussianBlur stdDeviation="0.7"/></filter><filter color-interpolation-filters="sRGB" id="sp1" x="0" y="0" width="100%" height="100%"><feTurbulence type="fractalNoise" baseFrequency="0.6" numOctaves="1" seed="9"/><feColorMatrix values="0 0 0 0 0  0 0 0 0 0  0 0 0 0 0  4 0 0 0 -1.9" result="m"/><feComposite in="SourceGraphic" in2="m" operator="in"/><feGaussianBlur stdDeviation="0.4"/></filter></defs><g clip-path="url(#c1)"><rect x="285.4" y="67.6" width="138.6" height="138.4" fill="#021a06"/><rect x="285.4" y="67.6" width="138.6" height="138.4" filter="url(#nz1)"/><g filter="url(#b1b)" opacity="0.55"><path d="M287 86 L336 101 L371 116 L412 130" stroke="#0a5a1c" stroke-width="9" fill="none"/><path d="M287 165 L342 190 L386 193 L424 200" stroke="#0a5a1c" stroke-width="8" fill="none"/><ellipse cx="330" cy="85" rx="30" ry="10" fill="#08481a"/><ellipse cx="340" cy="150" rx="60" ry="26" fill="#0c5a26"/><ellipse cx="390" cy="170" rx="40" ry="26" fill="#0c5a26"/><ellipse cx="320" cy="196" rx="40" ry="10" fill="#0c5a26"/></g><g filter="url(#b1)"><path d="M285 91.6 L300 95.6 L336.7 107 L355 112.7 L370.7 119 L390.4 125 L412 133 L426 137.5" stroke="#000400" stroke-width="4" fill="none"/><path d="M285 156 L300 163 L320 174 L342 184 L364 187 L386 187.5 L424 195" stroke="#000400" stroke-width="4" fill="none"/><ellipse cx="363" cy="150" rx="9" ry="5" fill="#000c02"/><ellipse cx="327" cy="169" rx="8" ry="5" fill="#000c02"/><ellipse cx="345" cy="80" rx="12" ry="6" fill="#001004"/><ellipse cx="390" cy="118" rx="10" ry="5" fill="#000c02"/></g><g filter="url(#b1)" opacity="0.85"><circle cx="294.2" cy="72.3" r="3.2" fill="#0c38e0"/><circle cx="318.8" cy="82.7" r="3.6" fill="#0c38e0"/><circle cx="302.7" cy="93" r="2.4" fill="#0c38e0"/><circle cx="389.6" cy="96" r="3.2" fill="#0c38e0"/><circle cx="368.8" cy="97.8" r="2.6" fill="#0c38e0"/><circle cx="345" cy="95" r="2.4" fill="#0c38e0"/><circle cx="402.9" cy="106" r="2.8" fill="#0c38e0"/><circle cx="412" cy="124" r="2.8" fill="#0c38e0"/><circle cx="420.8" cy="122" r="2.6" fill="#0c38e0"/><circle cx="395" cy="79" r="2" fill="#0c38e0"/><circle cx="412" cy="75" r="1.8" fill="#0c38e0"/><circle cx="392" cy="132" r="2.2" fill="#0c38e0"/><circle cx="288" cy="105" r="2.8" fill="#0c38e0"/><circle cx="310" cy="76" r="1.6" fill="#0c38e0"/><circle cx="372" cy="80" r="1.6" fill="#0c38e0"/><circle cx="356" cy="88" r="1.6" fill="#0c38e0"/><circle cx="380" cy="110" r="1.8" fill="#0c38e0"/></g><g filter="url(#b1b)" opacity="0.7"><ellipse cx="291" cy="118" rx="10" ry="13" fill="#1250d0"/><ellipse cx="327" cy="119" rx="13" ry="11" fill="#1250d0"/><ellipse cx="314" cy="152" rx="14" ry="14" fill="#1250d0"/><ellipse cx="356" cy="163" rx="14" ry="14" fill="#1250d0"/><ellipse cx="377" cy="168" rx="12" ry="13" fill="#1250d0"/><ellipse cx="401" cy="155" rx="14" ry="14" fill="#1250d0"/><ellipse cx="409" cy="180" rx="14" ry="14" fill="#1250d0"/><ellipse cx="335" cy="194" rx="13" ry="12" fill="#1250d0"/><ellipse cx="360" cy="198" rx="10" ry="9" fill="#1250d0"/><ellipse cx="300" cy="135" rx="9" ry="8" fill="#1250d0"/><ellipse cx="292" cy="172" rx="8" ry="9" fill="#1250d0"/><ellipse cx="305" cy="170" rx="8" ry="7" fill="#1250d0"/><ellipse cx="371" cy="140" rx="10" ry="6" fill="#1250d0"/><ellipse cx="423" cy="158" rx="8" ry="12" fill="#1250d0"/><ellipse cx="345" cy="132" rx="10" ry="7" fill="#1250d0"/><ellipse cx="318" cy="140" rx="8" ry="7" fill="#1250d0"/><ellipse cx="390" cy="192" rx="8" ry="6" fill="#1250d0"/><ellipse cx="296" cy="197" rx="8" ry="7" fill="#1250d0"/><ellipse cx="362" cy="124" rx="8" ry="6" fill="#1250d0"/><ellipse cx="384" cy="140" rx="8" ry="6" fill="#1250d0"/></g><g filter="url(#sp1)" opacity="0.55"><ellipse cx="291" cy="118" rx="10" ry="13" fill="#3aa8ff"/><ellipse cx="327" cy="119" rx="13" ry="11" fill="#3aa8ff"/><ellipse cx="314" cy="152" rx="14" ry="14" fill="#3aa8ff"/><ellipse cx="356" cy="163" rx="14" ry="14" fill="#3aa8ff"/><ellipse cx="377" cy="168" rx="12" ry="13" fill="#3aa8ff"/><ellipse cx="401" cy="155" rx="14" ry="14" fill="#3aa8ff"/><ellipse cx="409" cy="180" rx="14" ry="14" fill="#3aa8ff"/><ellipse cx="335" cy="194" rx="13" ry="12" fill="#3aa8ff"/><ellipse cx="360" cy="198" rx="10" ry="9" fill="#3aa8ff"/><ellipse cx="300" cy="135" rx="9" ry="8" fill="#3aa8ff"/><ellipse cx="292" cy="172" rx="8" ry="9" fill="#3aa8ff"/><ellipse cx="305" cy="170" rx="8" ry="7" fill="#3aa8ff"/><ellipse cx="371" cy="140" rx="10" ry="6" fill="#3aa8ff"/><ellipse cx="423" cy="158" rx="8" ry="12" fill="#3aa8ff"/><ellipse cx="345" cy="132" rx="10" ry="7" fill="#3aa8ff"/><ellipse cx="318" cy="140" rx="8" ry="7" fill="#3aa8ff"/><ellipse cx="390" cy="192" rx="8" ry="6" fill="#3aa8ff"/><ellipse cx="296" cy="197" rx="8" ry="7" fill="#3aa8ff"/><ellipse cx="362" cy="124" rx="8" ry="6" fill="#3aa8ff"/><ellipse cx="384" cy="140" rx="8" ry="6" fill="#3aa8ff"/></g><g filter="url(#b1b)" opacity="0.45"><ellipse cx="365" cy="125" rx="3" ry="3" fill="#146cf0"/><ellipse cx="352" cy="112" rx="2" ry="2" fill="#146cf0"/><ellipse cx="343" cy="108" rx="1.8" ry="1.8" fill="#146cf0"/><ellipse cx="360" cy="117" rx="1.8" ry="1.8" fill="#146cf0"/><ellipse cx="317.8" cy="143" rx="3.4" ry="3.4" fill="#146cf0"/><ellipse cx="304.6" cy="169.7" rx="4.2" ry="4.2" fill="#146cf0"/><ellipse cx="287.6" cy="171.6" rx="3" ry="3" fill="#146cf0"/><ellipse cx="300" cy="199" rx="3" ry="3" fill="#146cf0"/><ellipse cx="330" cy="128" rx="2.5" ry="2.5" fill="#146cf0"/><ellipse cx="345" cy="138" rx="2" ry="2" fill="#146cf0"/><ellipse cx="338" cy="131" rx="2" ry="2" fill="#146cf0"/><ellipse cx="352" cy="133" rx="1.8" ry="1.8" fill="#146cf0"/><ellipse cx="308" cy="112" rx="2.2" ry="2.2" fill="#146cf0"/><ellipse cx="340" cy="122" rx="2" ry="2" fill="#146cf0"/><ellipse cx="291" cy="117" rx="6.5" ry="8" fill="#2088f8"/><ellipse cx="299" cy="131" rx="5" ry="5" fill="#146cf0"/><ellipse cx="327" cy="118.6" rx="8.5" ry="7.5" fill="#2088f8"/><ellipse cx="316" cy="126" rx="4" ry="4" fill="#146cf0"/><ellipse cx="291" cy="139.5" rx="5" ry="5" fill="#2088f8"/><ellipse cx="299" cy="136" rx="4" ry="4" fill="#146cf0"/><ellipse cx="371" cy="139.5" rx="6" ry="3" fill="#146cf0"/><ellipse cx="305" cy="118" rx="5" ry="5" fill="#146cf0"/><ellipse cx="312" cy="128" rx="5" ry="5" fill="#146cf0"/><ellipse cx="340" cy="118" rx="5" ry="5" fill="#146cf0"/><ellipse cx="336" cy="130" rx="4" ry="4" fill="#146cf0"/><ellipse cx="322" cy="134" rx="4" ry="4" fill="#146cf0"/><ellipse cx="350" cy="125" rx="4" ry="4" fill="#146cf0"/><ellipse cx="296" cy="124" rx="4" ry="4" fill="#146cf0"/><ellipse cx="308" cy="108" rx="3.5" ry="3.5" fill="#146cf0"/><circle cx="314" cy="151.7" r="7.75" fill="none" stroke="#2088f8" stroke-width="5.5"/><circle cx="355.6" cy="162" r="8.0" fill="none" stroke="#2088f8" stroke-width="5"/><circle cx="376" cy="168" r="7.0" fill="none" stroke="#2088f8" stroke-width="5"/><circle cx="401" cy="154.6" r="8.25" fill="none" stroke="#2088f8" stroke-width="5.5"/><circle cx="408.5" cy="179" r="8.25" fill="none" stroke="#2088f8" stroke-width="5.5"/><circle cx="423" cy="158" r="5.0" fill="none" stroke="#2088f8" stroke-width="4"/><circle cx="334.8" cy="193" r="7.25" fill="none" stroke="#2088f8" stroke-width="5.5"/><circle cx="359.4" cy="197" r="5.0" fill="none" stroke="#2088f8" stroke-width="4"/></g><g filter="url(#b1)" opacity="0.85"><circle cx="314" cy="151.7" r="5.8" fill="#031a20"/><circle cx="355.6" cy="162" r="6.3" fill="#031a20"/><circle cx="376" cy="168" r="5.3" fill="#031a20"/><circle cx="401" cy="154.6" r="6.3" fill="#031a20"/><circle cx="408.5" cy="179" r="6.3" fill="#031a20"/><circle cx="423" cy="158" r="3.8" fill="#031a20"/><circle cx="334.8" cy="193" r="5.3" fill="#031a20"/><circle cx="359.4" cy="197" r="3.8" fill="#031a20"/></g><g filter="url(#rough)"><ellipse cx="365" cy="125" rx="3" ry="3" fill="#146cf0"/><ellipse cx="352" cy="112" rx="2" ry="2" fill="#146cf0"/><ellipse cx="343" cy="108" rx="1.8" ry="1.8" fill="#146cf0"/><ellipse cx="360" cy="117" rx="1.8" ry="1.8" fill="#146cf0"/><ellipse cx="317.8" cy="143" rx="3.4" ry="3.4" fill="#146cf0"/><ellipse cx="304.6" cy="169.7" rx="4.2" ry="4.2" fill="#146cf0"/><ellipse cx="287.6" cy="171.6" rx="3" ry="3" fill="#146cf0"/><ellipse cx="300" cy="199" rx="3" ry="3" fill="#146cf0"/><ellipse cx="330" cy="128" rx="2.5" ry="2.5" fill="#146cf0"/><ellipse cx="345" cy="138" rx="2" ry="2" fill="#146cf0"/><ellipse cx="338" cy="131" rx="2" ry="2" fill="#146cf0"/><ellipse cx="352" cy="133" rx="1.8" ry="1.8" fill="#146cf0"/><ellipse cx="308" cy="112" rx="2.2" ry="2.2" fill="#146cf0"/><ellipse cx="340" cy="122" rx="2" ry="2" fill="#146cf0"/><ellipse cx="291" cy="117" rx="6.5" ry="8" fill="#2088f8"/><ellipse cx="299" cy="131" rx="5" ry="5" fill="#146cf0"/><ellipse cx="327" cy="118.6" rx="8.5" ry="7.5" fill="#2088f8"/><ellipse cx="316" cy="126" rx="4" ry="4" fill="#146cf0"/><ellipse cx="291" cy="139.5" rx="5" ry="5" fill="#2088f8"/><ellipse cx="299" cy="136" rx="4" ry="4" fill="#146cf0"/><ellipse cx="371" cy="139.5" rx="6" ry="3" fill="#146cf0"/><ellipse cx="305" cy="118" rx="5" ry="5" fill="#146cf0"/><ellipse cx="312" cy="128" rx="5" ry="5" fill="#146cf0"/><ellipse cx="340" cy="118" rx="5" ry="5" fill="#146cf0"/><ellipse cx="336" cy="130" rx="4" ry="4" fill="#146cf0"/><ellipse cx="322" cy="134" rx="4" ry="4" fill="#146cf0"/><ellipse cx="350" cy="125" rx="4" ry="4" fill="#146cf0"/><ellipse cx="296" cy="124" rx="4" ry="4" fill="#146cf0"/><ellipse cx="308" cy="108" rx="3.5" ry="3.5" fill="#146cf0"/><circle cx="314" cy="151.7" r="7.75" fill="none" stroke="#2088f8" stroke-width="5.5"/><circle cx="355.6" cy="162" r="8.0" fill="none" stroke="#2088f8" stroke-width="5"/><circle cx="376" cy="168" r="7.0" fill="none" stroke="#2088f8" stroke-width="5"/><circle cx="401" cy="154.6" r="8.25" fill="none" stroke="#2088f8" stroke-width="5.5"/><circle cx="408.5" cy="179" r="8.25" fill="none" stroke="#2088f8" stroke-width="5.5"/><circle cx="423" cy="158" r="5.0" fill="none" stroke="#2088f8" stroke-width="4"/><circle cx="334.8" cy="193" r="7.25" fill="none" stroke="#2088f8" stroke-width="5.5"/><circle cx="359.4" cy="197" r="5.0" fill="none" stroke="#2088f8" stroke-width="4"/></g><g filter="url(#sp1)" opacity="0.8"><ellipse cx="365" cy="125" rx="3" ry="3" fill="#58d0ff"/><ellipse cx="352" cy="112" rx="2" ry="2" fill="#58d0ff"/><ellipse cx="343" cy="108" rx="1.8" ry="1.8" fill="#58d0ff"/><ellipse cx="360" cy="117" rx="1.8" ry="1.8" fill="#58d0ff"/><ellipse cx="317.8" cy="143" rx="3.4" ry="3.4" fill="#58d0ff"/><ellipse cx="304.6" cy="169.7" rx="4.2" ry="4.2" fill="#58d0ff"/><ellipse cx="287.6" cy="171.6" rx="3" ry="3" fill="#58d0ff"/><ellipse cx="300" cy="199" rx="3" ry="3" fill="#58d0ff"/><ellipse cx="330" cy="128" rx="2.5" ry="2.5" fill="#58d0ff"/><ellipse cx="345" cy="138" rx="2" ry="2" fill="#58d0ff"/><ellipse cx="338" cy="131" rx="2" ry="2" fill="#58d0ff"/><ellipse cx="352" cy="133" rx="1.8" ry="1.8" fill="#58d0ff"/><ellipse cx="308" cy="112" rx="2.2" ry="2.2" fill="#58d0ff"/><ellipse cx="340" cy="122" rx="2" ry="2" fill="#58d0ff"/><ellipse cx="291" cy="117" rx="6.5" ry="8" fill="#58d0ff"/><ellipse cx="299" cy="131" rx="5" ry="5" fill="#58d0ff"/><ellipse cx="327" cy="118.6" rx="8.5" ry="7.5" fill="#58d0ff"/><ellipse cx="316" cy="126" rx="4" ry="4" fill="#58d0ff"/><ellipse cx="291" cy="139.5" rx="5" ry="5" fill="#58d0ff"/><ellipse cx="299" cy="136" rx="4" ry="4" fill="#58d0ff"/><ellipse cx="371" cy="139.5" rx="6" ry="3" fill="#58d0ff"/><ellipse cx="305" cy="118" rx="5" ry="5" fill="#58d0ff"/><ellipse cx="312" cy="128" rx="5" ry="5" fill="#58d0ff"/><ellipse cx="340" cy="118" rx="5" ry="5" fill="#58d0ff"/><ellipse cx="336" cy="130" rx="4" ry="4" fill="#58d0ff"/><ellipse cx="322" cy="134" rx="4" ry="4" fill="#58d0ff"/><ellipse cx="350" cy="125" rx="4" ry="4" fill="#58d0ff"/><ellipse cx="296" cy="124" rx="4" ry="4" fill="#58d0ff"/><ellipse cx="308" cy="108" rx="3.5" ry="3.5" fill="#58d0ff"/><circle cx="314" cy="151.7" r="7.75" fill="none" stroke="#58d0ff" stroke-width="5.5"/><circle cx="355.6" cy="162" r="8.0" fill="none" stroke="#58d0ff" stroke-width="5"/><circle cx="376" cy="168" r="7.0" fill="none" stroke="#58d0ff" stroke-width="5"/><circle cx="401" cy="154.6" r="8.25" fill="none" stroke="#58d0ff" stroke-width="5.5"/><circle cx="408.5" cy="179" r="8.25" fill="none" stroke="#58d0ff" stroke-width="5.5"/><circle cx="423" cy="158" r="5.0" fill="none" stroke="#58d0ff" stroke-width="4"/><circle cx="334.8" cy="193" r="7.25" fill="none" stroke="#58d0ff" stroke-width="5.5"/><circle cx="359.4" cy="197" r="5.0" fill="none" stroke="#58d0ff" stroke-width="4"/></g></g><rect x="348.4" y="141.4" width="41.4" height="41.2" fill="none" stroke="#e0901c" stroke-width="0.9"/><path d="M389.8 145 V182.6 H370" fill="none" stroke="#c878d0" stroke-width="0.9" opacity="0.7"/><rect x="298.8" y="191.9" width="34.3" height="1.4" fill="#fff"/><text x="316.1" y="188.7" font-size="6.5" font-weight="bold" fill="#fff" text-anchor="middle">20 µm</text></svg>
<div class="a t" style="top:209.9px;height:6.0px;line-height:6.0px;font-size:4.59px;color:#1c1c1c;left:286.0px;transform-origin:0 50%;">scan axis</div>
<div class="a" style="left:309.1px;top:209.7px;width:5.8px;height:5.8px;background:#ffffff;box-shadow:inset 0 0 0 0.7px #7d867d;border-radius:2.9px;"></div>
<div class="a" style="left:309.9px;top:210.5px;width:4.2px;height:4.2px;background:#1a8a35;border-radius:2.9px;"></div>
<div class="a" style="left:311.0px;top:211.6px;width:2.0px;height:2.0px;background:#0a4a1a;border-radius:1px;"></div>
<div class="a t" style="top:210.3px;height:6.0px;line-height:6.0px;font-size:4.59px;color:#1c1c1c;left:317.0px;transform-origin:0 50%;">x-y</div>
<div class="a" style="left:334.1px;top:209.7px;width:5.8px;height:5.8px;background:#ffffff;box-shadow:inset 0 0 0 0.7px #7d867d;border-radius:2.9px;"></div>
<div class="a t" style="top:210.3px;height:6.0px;line-height:6.0px;font-size:4.59px;color:#1c1c1c;left:342.0px;transform-origin:0 50%;">x-z</div>
<div class="a" style="left:359.5px;top:209.7px;width:5.8px;height:5.8px;background:#ffffff;box-shadow:inset 0 0 0 0.7px #7d867d;border-radius:2.9px;"></div>
<div class="a t" style="top:210.3px;height:6.0px;line-height:6.0px;font-size:4.59px;color:#1c1c1c;left:367.4px;transform-origin:0 50%;">y-z</div>
<div class="a" style="left:385.0px;top:209.6px;width:5.8px;height:5.8px;background:#ffffff;box-shadow:inset 0 0 0 0.7px #7d867d;"></div>
<div class="a t" style="top:210.3px;height:6.0px;line-height:6.0px;font-size:4.59px;color:#1c1c1c;left:392.2px;transform-origin:0 50%;">Lock Z Axis</div>
<div class="a t" style="top:221.1px;height:6.0px;line-height:6.0px;font-size:4.64px;color:#1c1c1c;left:286.0px;transform-origin:0 50%;">X</div>
<div class="a" style="left:292.0px;top:219.4px;width:25.6px;height:8.6px;background:#ffffff;box-shadow:inset 0 0 0 0.7px #8a938a;"></div>
<div class="a t" style="top:221.6px;height:6.0px;line-height:6.0px;font-size:4.59px;color:#1c1c1c;left:115.6px;width:200px;text-align:right;transform-origin:100% 50%;">36,80 µm</div>
<div class="a" style="left:317.6px;top:219.4px;width:6.8px;height:4.3px;background:#e8eee7;box-shadow:inset 0 0 0 0.5px #8a938a;"></div>
<div class="a" style="left:317.6px;top:223.7px;width:6.8px;height:4.3px;background:#e8eee7;box-shadow:inset 0 0 0 0.5px #8a938a;"></div>
<svg class="a" style="left:317.6px;top:219.4px" width="6.8" height="8.6"><path d="M1.7999999999999998 3.0 L3.4 1.0999999999999996 L5.0 3.0Z M1.7999999999999998 5.6 L3.4 7.5 L5.0 5.6Z" fill="#222"/></svg>
<div class="a t" style="top:221.1px;height:6.0px;line-height:6.0px;font-size:4.64px;color:#1c1c1c;left:331.0px;transform-origin:0 50%;">Y</div>
<div class="a" style="left:337.0px;top:219.4px;width:25.4px;height:8.6px;background:#ffffff;box-shadow:inset 0 0 0 0.7px #8a938a;"></div>
<div class="a t" style="top:221.6px;height:6.0px;line-height:6.0px;font-size:4.59px;color:#1c1c1c;left:160.4px;width:200px;text-align:right;transform-origin:100% 50%;">43,20 µm</div>
<div class="a" style="left:362.4px;top:219.4px;width:6.8px;height:4.3px;background:#e8eee7;box-shadow:inset 0 0 0 0.5px #8a938a;"></div>
<div class="a" style="left:362.4px;top:223.7px;width:6.8px;height:4.3px;background:#e8eee7;box-shadow:inset 0 0 0 0.5px #8a938a;"></div>
<svg class="a" style="left:362.4px;top:219.4px" width="6.8" height="8.6"><path d="M1.7999999999999998 3.0 L3.4 1.0999999999999996 L5.0 3.0Z M1.7999999999999998 5.6 L3.4 7.5 L5.0 5.6Z" fill="#222"/></svg>
<div class="a t" style="top:221.1px;height:6.0px;line-height:6.0px;font-size:4.64px;color:#1c1c1c;left:376.0px;transform-origin:0 50%;">Z</div>
<div class="a" style="left:382.4px;top:219.4px;width:25.2px;height:8.6px;background:#ffffff;box-shadow:inset 0 0 0 0.7px #8a938a;"></div>
<div class="a t" style="top:221.6px;height:6.0px;line-height:6.0px;font-size:4.59px;color:#1c1c1c;left:205.6px;width:200px;text-align:right;transform-origin:100% 50%;">40,00 µm</div>
<div class="a" style="left:407.6px;top:219.4px;width:6.8px;height:4.3px;background:#e8eee7;box-shadow:inset 0 0 0 0.5px #8a938a;"></div>
<div class="a" style="left:407.6px;top:223.7px;width:6.8px;height:4.3px;background:#e8eee7;box-shadow:inset 0 0 0 0.5px #8a938a;"></div>
<svg class="a" style="left:407.6px;top:219.4px" width="6.8" height="8.6"><path d="M1.7999999999999998 3.0 L3.4 1.0999999999999996 L5.0 3.0Z M1.7999999999999998 5.6 L3.4 7.5 L5.0 5.6Z" fill="#222"/></svg>
<div class="a t" style="top:233.1px;height:6.0px;line-height:6.0px;font-size:4.59px;color:#1c1c1c;left:286.0px;transform-origin:0 50%;">dX</div>
<div class="a" style="left:292.0px;top:231.4px;width:25.6px;height:8.4px;background:#ffffff;box-shadow:inset 0 0 0 0.7px #8a938a;"></div>
<div class="a t" style="top:233.5px;height:6.0px;line-height:6.0px;font-size:4.59px;color:#1c1c1c;left:115.6px;width:200px;text-align:right;transform-origin:100% 50%;">23,20 µm</div>
<div class="a" style="left:317.6px;top:231.4px;width:6.8px;height:4.2px;background:#e8eee7;box-shadow:inset 0 0 0 0.5px #8a938a;"></div>
<div class="a" style="left:317.6px;top:235.6px;width:6.8px;height:4.2px;background:#e8eee7;box-shadow:inset 0 0 0 0.5px #8a938a;"></div>
<svg class="a" style="left:317.6px;top:231.4px" width="6.8" height="8.4"><path d="M1.7999999999999998 2.9000000000000004 L3.4 1.0 L5.0 2.9000000000000004Z M1.7999999999999998 5.5 L3.4 7.4 L5.0 5.5Z" fill="#222"/></svg>
<div class="a t" style="top:233.1px;height:6.0px;line-height:6.0px;font-size:4.59px;color:#1c1c1c;left:331.0px;transform-origin:0 50%;">dY</div>
<div class="a" style="left:337.0px;top:231.4px;width:32.6px;height:8.4px;background:#e4ebe3;box-shadow:inset 0 0 0 0.6px #8d968d;"></div>
<div class="a t" style="top:233.5px;height:6.0px;line-height:6.0px;font-size:4.59px;color:#1c1c1c;left:167.6px;width:200px;text-align:right;transform-origin:100% 50%;">23,20 µm&nbsp;</div>
<div class="a" style="left:285.4px;top:244.0px;width:23.6px;height:8.6px;background:#e9efe8;box-shadow:inset 0 0 0 0.6px #9aa39a;"></div>
<div class="a t" style="top:246.1px;height:6.0px;line-height:6.0px;font-size:4.59px;color:#1c1c1c;left:197.2px;width:200px;text-align:center;transform-origin:50% 50%;">Accurate</div>
<div class="a" style="left:309.0px;top:243.2px;width:17.6px;height:9.6px;background:#1fa13f;box-shadow:inset 0 0 0 0.9px #0f5a22;"></div>
<div class="a t" style="top:245.9px;height:6.0px;line-height:6.0px;font-size:4.59px;color:#e8f8ec;left:217.8px;width:200px;text-align:center;transform-origin:50% 50%;">Fast</div>
<div class="a" style="left:285.0px;top:252.6px;width:134.0px;height:46.6px;box-shadow:inset 0 0 0 0.8px #7a837a;"></div>
<div class="a t" style="top:257.1px;height:6.0px;line-height:6.0px;font-size:4.59px;color:#1c1c1c;left:287.0px;transform-origin:0 50%;">img size</div>
<div class="a" style="left:306.0px;top:255.4px;width:13.0px;height:8.4px;background:#ffffff;box-shadow:inset 0 0 0 0.7px #8a938a;"></div>
<div class="a t" style="top:257.5px;height:6.0px;line-height:6.0px;font-size:4.59px;color:#1c1c1c;left:117.0px;width:200px;text-align:right;transform-origin:100% 50%;">512</div>
<div class="a" style="left:319.0px;top:255.4px;width:7.0px;height:4.2px;background:#e8eee7;box-shadow:inset 0 0 0 0.5px #8a938a;"></div>
<div class="a" style="left:319.0px;top:259.6px;width:7.0px;height:4.2px;background:#e8eee7;box-shadow:inset 0 0 0 0.5px #8a938a;"></div>
<svg class="a" style="left:319.0px;top:255.4px" width="7" height="8.4"><path d="M1.9 2.9000000000000004 L3.5 1.0 L5.1 2.9000000000000004Z M1.9 5.5 L3.5 7.4 L5.1 5.5Z" fill="#222"/></svg>
<div class="a" style="left:326.0px;top:255.4px;width:20.0px;height:8.4px;background:#e4ebe3;box-shadow:inset 0 0 0 0.6px #8d968d;"></div>
<div class="a t" style="top:257.5px;height:6.0px;line-height:6.0px;font-size:4.59px;color:#1c1c1c;left:144.0px;width:200px;text-align:right;transform-origin:100% 50%;">512</div>
<div class="a" style="left:347.0px;top:256.6px;width:5.6px;height:5.6px;background:#2ca448;box-shadow:inset 0 0 0 0.7px #1a7030;"></div>
<svg class="a" style="left:347.0px;top:256.6px" width="5.6" height="5.6"><path d="M1.2 2.8 L2.352 4.367999999999999 L4.6 1.232" stroke="#0a3814" stroke-width="1.0" fill="none"/></svg>
<div class="a t" style="top:257.3px;height:6.0px;line-height:6.0px;font-size:4.59px;color:#1c1c1c;left:354.0px;transform-origin:0 50%;">square</div>
<div class="a" style="left:373.1px;top:256.7px;width:5.8px;height:5.8px;background:#ffffff;box-shadow:inset 0 0 0 0.7px #7d867d;border-radius:2.9px;"></div>
<div class="a" style="left:373.9px;top:257.5px;width:4.2px;height:4.2px;background:#1a8a35;border-radius:2.9px;"></div>
<div class="a" style="left:375.0px;top:258.6px;width:2.0px;height:2.0px;background:#0a4a1a;border-radius:1px;"></div>
<div class="a t" style="top:257.3px;height:6.0px;line-height:6.0px;font-size:4.59px;color:#1c1c1c;left:381.0px;transform-origin:0 50%;">monodirectional</div>
<div class="a t" style="top:268.3px;height:6.0px;line-height:6.0px;font-size:4.59px;color:#1c1c1c;left:287.0px;transform-origin:0 50%;">dwell time</div>
<div class="a" style="left:306.4px;top:266.4px;width:32.6px;height:8.6px;background:#ffffff;box-shadow:inset 0 0 0 0.7px #8a938a;"></div>
<div class="a t" style="top:268.6px;height:6.0px;line-height:6.0px;font-size:4.59px;color:#1c1c1c;left:137.0px;width:200px;text-align:right;transform-origin:100% 50%;">2.0 ms</div>
<div class="a" style="left:339.0px;top:266.4px;width:7.0px;height:4.3px;background:#e8eee7;box-shadow:inset 0 0 0 0.5px #8a938a;"></div>
<div class="a" style="left:339.0px;top:270.7px;width:7.0px;height:4.3px;background:#e8eee7;box-shadow:inset 0 0 0 0.5px #8a938a;"></div>
<svg class="a" style="left:339.0px;top:266.4px" width="7" height="8.6"><path d="M1.9 3.0 L3.5 1.0999999999999996 L5.1 3.0Z M1.9 5.6 L3.5 7.5 L5.1 5.6Z" fill="#222"/></svg>
<div class="a" style="left:373.1px;top:268.1px;width:5.8px;height:5.8px;background:#ffffff;box-shadow:inset 0 0 0 0.7px #7d867d;border-radius:2.9px;"></div>
<div class="a t" style="top:268.7px;height:6.0px;line-height:6.0px;font-size:4.59px;color:#1c1c1c;left:381.0px;transform-origin:0 50%;">bidirectional</div>
<div class="a t" style="top:279.7px;height:6.0px;line-height:6.0px;font-size:4.59px;color:#1c1c1c;left:287.0px;transform-origin:0 50%;">Resol.</div>
<div class="a" style="left:306.0px;top:278.4px;width:40.4px;height:8.6px;background:#e4ebe3;box-shadow:inset 0 0 0 0.6px #8d968d;"></div>
<div class="a t" style="top:280.6px;height:6.0px;line-height:6.0px;font-size:4.59px;color:#1c1c1c;left:144.4px;width:200px;text-align:right;transform-origin:100% 50%;">0,05&nbsp; µm/px</div>
<div class="a t" style="top:279.7px;height:6.0px;line-height:6.0px;font-size:4.59px;color:#1c1c1c;left:349.0px;transform-origin:0 50%;">Est. time</div>
<div class="a" style="left:373.6px;top:278.4px;width:42.4px;height:8.6px;background:#e4ebe3;box-shadow:inset 0 0 0 0.6px #8d968d;"></div>
<div class="a t" style="top:280.6px;height:6.0px;line-height:6.0px;font-size:4.59px;color:#1c1c1c;left:214.0px;width:200px;text-align:right;transform-origin:100% 50%;">638,37&nbsp;&nbsp; s&nbsp;</div>
<div class="a t" style="top:291.3px;height:6.0px;line-height:6.0px;font-size:4.59px;color:#1c1c1c;left:287.0px;transform-origin:0 50%;">Learning Time</div>
<div class="a" style="left:324.0px;top:289.6px;width:15.0px;height:8.4px;background:#ffffff;box-shadow:inset 0 0 0 0.7px #8a938a;"></div>
<div class="a t" style="top:291.7px;height:6.0px;line-height:6.0px;font-size:4.59px;color:#1c1c1c;left:137.0px;width:200px;text-align:right;transform-origin:100% 50%;">5 s</div>
<div class="a" style="left:339.0px;top:289.6px;width:7.0px;height:4.2px;background:#e8eee7;box-shadow:inset 0 0 0 0.5px #8a938a;"></div>
<div class="a" style="left:339.0px;top:293.8px;width:7.0px;height:4.2px;background:#e8eee7;box-shadow:inset 0 0 0 0.5px #8a938a;"></div>
<svg class="a" style="left:339.0px;top:289.6px" width="7" height="8.4"><path d="M1.9 2.9000000000000004 L3.5 1.0 L5.1 2.9000000000000004Z M1.9 5.5 L3.5 7.4 L5.1 5.5Z" fill="#222"/></svg>
<div class="a" style="left:286.0px;top:301.6px;width:22.0px;height:8.6px;background:#e6ece5;box-shadow:inset 0 0 0 0.7px #a7b0a7;border-radius:1.2px;border-bottom:0.8px solid #8a938a;border-right:0.8px solid #98a198;box-sizing:border-box;"></div>
<div class="a t" style="top:303.7px;height:6.0px;line-height:6.0px;font-size:4.59px;color:#aab2aa;left:197.0px;width:200px;text-align:center;transform-origin:50% 50%;">Start</div>
<div class="a" style="left:312.6px;top:301.6px;width:36.4px;height:9.0px;background:#e9efe8;box-shadow:inset 0 0 0 0.7px #98a198;"></div>
<div class="a" style="left:313.4px;top:302.4px;width:27.0px;height:7.4px;background:#22a444;"></div>
<div class="a" style="left:353.0px;top:301.0px;width:23.0px;height:9.4px;background:#ff6a14;box-shadow:inset 0 0 0 0.7px #a7b0a7;border-radius:1.2px;border-bottom:0.8px solid #8a938a;border-right:0.8px solid #98a198;box-sizing:border-box;"></div>
<div class="a t" style="top:303.5px;height:6.0px;line-height:6.0px;font-size:4.59px;color:#3a1000;left:264.5px;width:200px;text-align:center;transform-origin:50% 50%;">Stop</div>
<div class="a t" style="top:302.9px;height:6.0px;line-height:6.0px;font-size:4.59px;color:#1c1c1c;left:380.0px;transform-origin:0 50%;">Remaining 7,46 min</div>
<div class="a" style="left:287.6px;top:313.6px;width:16.8px;height:5.6px;background:#e9efe8;box-shadow:inset 0 0 0 0.7px #a7b0a7;border-radius:1.2px;border-bottom:0.8px solid #8a938a;border-right:0.8px solid #98a198;box-sizing:border-box;"></div>
<div class="a t" style="top:314.3px;height:5.9px;line-height:5.9px;font-size:4.5px;color:#1c1c1c;left:196.0px;width:200px;text-align:center;transform-origin:50% 50%;">more...</div>
<div class="a" style="left:283.9px;top:323.7px;width:143.1px;height:10.1px;background:#1fa13f;border-top:0.8px solid #6fd088;border-left:0.7px solid #5fc878;box-sizing:border-box;"></div>
<div class="a" style="left:283.9px;top:333.8px;width:143.1px;height:1.2px;background:#d4f2da;"></div>
<div class="a" style="left:286.3px;top:325.9px;width:5.8px;height:5.8px;background:#f4f8f4;"></div>
<div class="a" style="left:288.1px;top:327.4px;width:2.2px;height:2.2px;background:#3a3f3a;"></div>
<div class="a t" style="top:326.1px;height:6.4px;line-height:6.4px;font-size:4.9px;color:#c0eecb;left:293.9px;transform-origin:0 50%;">Point/Time Trace</div>
<div class="a" style="left:283.9px;top:335.9px;width:143.1px;height:10.3px;background:#1fa13f;border-top:0.8px solid #6fd088;border-left:0.7px solid #5fc878;box-sizing:border-box;"></div>
<div class="a" style="left:283.9px;top:346.2px;width:143.1px;height:1.2px;background:#d4f2da;"></div>
<div class="a" style="left:286.3px;top:338.3px;width:5.8px;height:5.8px;background:#f4f8f4;"></div>
<div class="a" style="left:288.1px;top:339.8px;width:2.2px;height:2.2px;background:#3a3f3a;"></div>
<div class="a t" style="top:338.4px;height:6.4px;line-height:6.4px;font-size:4.9px;color:#c0eecb;left:293.9px;transform-origin:0 50%;">Automated measurements</div>
<div class="a" style="left:287.0px;top:350.0px;width:5.8px;height:5.8px;background:#ffffff;box-shadow:inset 0 0 0 0.7px #7d867d;"></div>
<div class="a t" style="top:350.7px;height:6.0px;line-height:6.0px;font-size:4.59px;color:#1c1c1c;left:295.0px;transform-origin:0 50%;">Enable Automated measurements</div>
<div class="a" style="left:285.4px;top:359.2px;width:26.2px;height:9.2px;background:#1fa13f;box-shadow:inset 0 0 0 0.9px #0f5a22;"></div>
<div class="a t" style="top:361.5px;height:6.0px;line-height:6.0px;font-size:4.59px;color:#e8f8ec;left:198.5px;width:200px;text-align:center;transform-origin:50% 50%;">Time Scan</div>
<div class="a" style="left:311.8px;top:359.8px;width:21.2px;height:8.4px;background:#e9efe8;box-shadow:inset 0 0 0 0.6px #9aa39a;"></div>
<div class="a t" style="top:361.7px;height:6.0px;line-height:6.0px;font-size:4.59px;color:#1c1c1c;left:222.4px;width:200px;text-align:center;transform-origin:50% 50%;">Z - Scan</div>
<div class="a" style="left:333.2px;top:359.8px;width:28.8px;height:8.4px;background:#e9efe8;box-shadow:inset 0 0 0 0.6px #9aa39a;"></div>
<div class="a t" style="top:361.7px;height:6.0px;line-height:6.0px;font-size:4.59px;color:#1c1c1c;left:247.6px;width:200px;text-align:center;transform-origin:50% 50%;">Multi Range</div>
<div class="a" style="left:285.4px;top:368.0px;width:139.6px;height:25.0px;box-shadow:inset 0 0 0 0.8px #7a837a;"></div>
<div class="a t" style="top:371.9px;height:6.0px;line-height:6.0px;font-size:4.59px;color:#1c1c1c;left:289.0px;transform-origin:0 50%;">Measurements</div>
<div class="a" style="left:348.4px;top:370.4px;width:30.6px;height:8.2px;background:#ffffff;box-shadow:inset 0 0 0 0.7px #8a938a;"></div>
<div class="a t" style="top:372.4px;height:6.0px;line-height:6.0px;font-size:4.59px;color:#1c1c1c;left:177.0px;width:200px;text-align:right;transform-origin:100% 50%;">10</div>
<div class="a" style="left:379.0px;top:370.4px;width:7.0px;height:4.1px;background:#e8eee7;box-shadow:inset 0 0 0 0.5px #8a938a;"></div>
<div class="a" style="left:379.0px;top:374.5px;width:7.0px;height:4.1px;background:#e8eee7;box-shadow:inset 0 0 0 0.5px #8a938a;"></div>
<svg class="a" style="left:379.0px;top:370.4px" width="7" height="8.2"><path d="M1.9 2.8 L3.5 0.8999999999999995 L5.1 2.8Z M1.9 5.3999999999999995 L3.5 7.3 L5.1 5.3999999999999995Z" fill="#222"/></svg>
<div class="a t" style="top:383.5px;height:6.0px;line-height:6.0px;font-size:4.59px;color:#1c1c1c;left:289.0px;transform-origin:0 50%;">Time interval</div>
<div class="a" style="left:348.4px;top:382.0px;width:30.6px;height:8.4px;background:#ffffff;box-shadow:inset 0 0 0 0.7px #8a938a;"></div>
<div class="a t" style="top:384.1px;height:6.0px;line-height:6.0px;font-size:4.59px;color:#1c1c1c;left:177.0px;width:200px;text-align:right;transform-origin:100% 50%;">10 s</div>
<div class="a" style="left:379.0px;top:382.0px;width:7.0px;height:4.2px;background:#e8eee7;box-shadow:inset 0 0 0 0.5px #8a938a;"></div>
<div class="a" style="left:379.0px;top:386.2px;width:7.0px;height:4.2px;background:#e8eee7;box-shadow:inset 0 0 0 0.5px #8a938a;"></div>
<svg class="a" style="left:379.0px;top:382.0px" width="7" height="8.4"><path d="M1.9 2.9000000000000004 L3.5 1.0 L5.1 2.9000000000000004Z M1.9 5.5 L3.5 7.4 L5.1 5.5Z" fill="#222"/></svg>
<div class="a" style="left:427.6px;top:30.0px;width:0.9px;height:417.0px;background:#8f988f;"></div>
<div class="a t" style="top:34.3px;height:6.0px;line-height:6.0px;font-size:4.59px;color:#1c1c1c;left:429.0px;transform-origin:0 50%;">Sync</div>
<div class="a" style="left:441.0px;top:33.0px;width:38.0px;height:8.2px;background:#e4ebe3;box-shadow:inset 0 0 0 0.6px #8d968d;"></div>
<div class="a t" style="top:35.0px;height:6.0px;line-height:6.0px;font-size:4.59px;color:#1c1c1c;left:277.0px;width:200px;text-align:right;transform-origin:100% 50%;">39999720&nbsp; Hz</div>
<div class="a t" style="top:34.5px;height:6.0px;line-height:6.0px;font-size:4.59px;color:#1c1c1c;left:484.6px;transform-origin:0 50%;">Ch. 1</div>
<div class="a" style="left:498.0px;top:33.0px;width:33.6px;height:8.2px;background:#e4ebe3;box-shadow:inset 0 0 0 0.6px #8d968d;"></div>
<div class="a t" style="top:35.0px;height:6.0px;line-height:6.0px;font-size:4.59px;color:#1c1c1c;left:329.6px;width:200px;text-align:right;transform-origin:100% 50%;">0&nbsp; cps</div>
<div class="a t" style="top:34.5px;height:6.0px;line-height:6.0px;font-size:4.59px;color:#1c1c1c;left:537.0px;transform-origin:0 50%;">Ch. 3</div>
<div class="a" style="left:552.5px;top:33.0px;width:35.0px;height:8.2px;background:#e4ebe3;box-shadow:inset 0 0 0 0.6px #8d968d;"></div>
<div class="a t" style="top:35.0px;height:6.0px;line-height:6.0px;font-size:4.59px;color:#1c1c1c;left:385.5px;width:200px;text-align:right;transform-origin:100% 50%;">251040&nbsp; cps</div>
<div class="a t" style="top:46.1px;height:6.0px;line-height:6.0px;font-size:4.59px;color:#1c1c1c;left:484.6px;transform-origin:0 50%;">Ch. 2</div>
<div class="a" style="left:498.0px;top:44.5px;width:33.6px;height:8.0px;background:#e4ebe3;box-shadow:inset 0 0 0 0.6px #8d968d;"></div>
<div class="a t" style="top:46.4px;height:6.0px;line-height:6.0px;font-size:4.59px;color:#1c1c1c;left:329.6px;width:200px;text-align:right;transform-origin:100% 50%;">134640&nbsp; cps</div>
<div class="a t" style="top:46.1px;height:6.0px;line-height:6.0px;font-size:4.59px;color:#1c1c1c;left:537.0px;transform-origin:0 50%;">Ch. 4</div>
<div class="a" style="left:552.5px;top:44.5px;width:35.0px;height:8.0px;background:#e4ebe3;box-shadow:inset 0 0 0 0.6px #8d968d;"></div>
<div class="a t" style="top:46.4px;height:6.0px;line-height:6.0px;font-size:4.59px;color:#1c1c1c;left:385.5px;width:200px;text-align:right;transform-origin:100% 50%;">0&nbsp; cps</div>
<div class="a" style="left:428.8px;top:55.2px;width:366.8px;height:189.4px;box-shadow:inset 0 0 0 0.8px #a3aca3;"></div>
<div class="a" style="left:429.6px;top:56.0px;width:365.0px;height:188.0px;box-shadow:inset 0 0 0 0.8px #f2f7f2;"></div>
<div class="a" style="left:432.6px;top:59.6px;width:5.4px;height:5.4px;background:#2ca448;box-shadow:inset 0 0 0 0.7px #1a7030;"></div>
<svg class="a" style="left:432.6px;top:59.6px" width="5.4" height="5.4"><path d="M1.2 2.7 L2.2680000000000002 4.212000000000001 L4.4 1.1880000000000002" stroke="#0a3814" stroke-width="1.0" fill="none"/></svg>
<div class="a t" style="top:60.1px;height:6.0px;line-height:6.0px;font-size:4.59px;color:#1c1c1c;left:439.4px;transform-origin:0 50%;">active</div>
<div class="a t" style="top:60.1px;height:6.0px;line-height:6.0px;font-size:4.59px;color:#1c1c1c;left:454.4px;transform-origin:0 50%;">refresh:</div>
<div class="a" style="left:473.0px;top:59.8px;width:5.2px;height:5.2px;background:#ffffff;box-shadow:inset 0 0 0 0.7px #7d867d;border-radius:2.6px;"></div>
<div class="a t" style="top:60.1px;height:6.0px;line-height:6.0px;font-size:4.59px;color:#1c1c1c;left:480.2px;transform-origin:0 50%;">0,1 s</div>
<div class="a" style="left:495.8px;top:59.8px;width:5.2px;height:5.2px;background:#ffffff;box-shadow:inset 0 0 0 0.7px #7d867d;border-radius:2.6px;"></div>
<div class="a" style="left:496.6px;top:60.6px;width:3.6px;height:3.6px;background:#1a8a35;border-radius:2.6px;"></div>
<div class="a" style="left:497.4px;top:61.4px;width:2.0px;height:2.0px;background:#0a4a1a;border-radius:1px;"></div>
<div class="a t" style="top:60.1px;height:6.0px;line-height:6.0px;font-size:4.59px;color:#1c1c1c;left:503.0px;transform-origin:0 50%;">1,0 s</div>
<div class="a t" style="top:60.1px;height:6.0px;line-height:6.0px;font-size:4.59px;color:#1c1c1c;left:519.0px;transform-origin:0 50%;">Running</div>
<svg class="a" style="left:0;top:0;font-family:'Liberation Sans',sans-serif" width="800" height="450"><defs><clipPath id="c2"><rect x="430.7" y="69.3" width="173.1" height="130.2"/></clipPath><filter color-interpolation-filters="sRGB" id="b2" x="-5%" y="-5%" width="110%" height="110%"><feGaussianBlur stdDeviation="1.5"/></filter><filter color-interpolation-filters="sRGB" id="b2b" x="-5%" y="-5%" width="110%" height="110%"><feGaussianBlur stdDeviation="2"/></filter><filter color-interpolation-filters="sRGB" id="nz2" x="0" y="0" width="100%" height="100%"><feTurbulence type="fractalNoise" baseFrequency="0.3" numOctaves="2" seed="7"/><feColorMatrix values="0 0 0 0 0.25  0 0 0 0 0.1  0 0 0 0 0  1.6 0 0 0 -0.75"/></filter></defs><rect x="430.7" y="69.3" width="173.1" height="172.8" fill="#000"/><g clip-path="url(#c2)"><g filter="url(#b2)"><rect x="425" y="64" width="185" height="140" fill="#06b428"/><g filter="url(#b2b)"><polygon points="431,128 449,129 456,138 448,146 431,146" fill="#0c6a1c" /><polygon points="431,151 447,153 458,158 464,160 462,170 450,173 431,169" fill="#0c6e1c" /><ellipse cx="534" cy="172" rx="17" ry="15" fill="#0a8a1c"/><ellipse cx="584" cy="166" rx="20" ry="19" fill="#2a7a1a"/><ellipse cx="572" cy="170" rx="6" ry="8" fill="#4a5a10"/><ellipse cx="588" cy="158" rx="8" ry="5" fill="#54500e"/><ellipse cx="597" cy="178" rx="5" ry="6" fill="#3a6a12"/><ellipse cx="577" cy="158" rx="9" ry="6" fill="#4a6a10"/><ellipse cx="592" cy="172" rx="7" ry="9" fill="#2a7a14"/><polygon points="440,191 460,193 478,187 486,178 488,184 480,194 460,197 442,195" fill="#068a1c" /><polygon points="500,132 520,143 515,160 498,165 492,150" fill="#0a9a20" /></g><polygon points="431,100.5 446.7,101.8 456,90.5 461,98.5 467.8,103 474.4,102 483.3,98.6 487,97 487,113 481,119 478,125 462,128 452,124.5 441,121.5 431,123" fill="#10f048" /><path d="M478 117 L485 123 L492 128.7 L500 134 L494 141" stroke="#2cf860" stroke-width="8.5" stroke-linejoin="round" fill="none"/><path d="M494 141 L489 151 L487.5 165 L490 178 L496 186" stroke="#28e058" stroke-width="5.5" stroke-linejoin="round" fill="none"/><path d="M512 172 A21 24 0 0 1 554 172 L556 186" stroke="#50fa78" stroke-width="5.6" fill="none"/><path d="M512 172 L510 188" stroke="#50fa78" stroke-width="5.4" fill="none"/><polygon points="489,69.6 553.8,69.6 549.3,77 546,84.7 548,94.7 538,95.8 527,97 522.7,104.7 517.8,105.8 507.8,100 496.7,107 491.5,111 489.5,104 487.8,95.8 485.5,88 479,81.3 472,78 476.7,75.8 487.8,72.4" fill="#12b838" /><ellipse cx="502" cy="84" rx="11" ry="9" fill="#18e050"/><ellipse cx="540" cy="88" rx="7" ry="6" fill="#18d84c"/><polygon points="431,64 489,64 489,69.6 487.8,72.4 476.7,75.8 472,78 479,81.3 485.5,88 487.8,95.8 483.3,98 474.4,101.3 467.8,102.4 461,98 456,90 446.7,101.3 425,100.2 425,64" fill="#240000" /><polygon points="553.8,64 610,64 610,140 597,146 593.8,145 588,142 580.4,145 576,137.5 568,134 566.5,140 567,162 561.5,162 561,147 555,146.4 543.8,144 530.4,136.4 520,140.5 517.8,142 507.8,128.7 496.7,126.4 486.5,112 487,96 489,96 489.5,104 491.5,111 496.7,107 507.8,100 517.8,105.8 522.7,104.7 527,97 538,95.8 548,94.7 546,84.7 549.3,77 553.8,69.6" fill="#3c0200" /><polygon points="443,118 450,112.6 462,113.2 471,117.5 477,123.5 468,124 458,121.6 448,121" fill="#4a0400" /><polygon points="449,138 455,135 462,138 468,136 474,141 476,150 475,158 466,159 458,157 449,158 447,152 431,149 431,146 447,145" fill="#5a1400" /><polygon points="596,156 604,156 604,170.5 598,168" fill="#4a0400" /><polygon points="560,156 565,156 564,162.7 560,160" fill="#4a0400" /><ellipse cx="499" cy="192.5" rx="8" ry="4.6" fill="#0a4a10"/><ellipse cx="502" cy="191.5" rx="3" ry="2.2" fill="#4a0800"/><ellipse cx="527" cy="172.5" rx="4" ry="4.5" fill="#3a5a08"/><ellipse cx="541.5" cy="177" rx="3" ry="3.6" fill="#3a5a08"/><ellipse cx="575" cy="159" rx="9" ry="4" fill="#4a5a08" opacity="0.7"/><ellipse cx="590" cy="150" rx="4" ry="3" fill="#4a5a08" opacity="0.6"/><ellipse cx="569" cy="79.5" rx="3.6" ry="5" fill="#10c838" transform="rotate(-25 569 79.5)"/><ellipse cx="598" cy="89" rx="2.4" ry="5" fill="#10c838" transform="rotate(35 598 89)"/><polygon points="604,101 597,106 604,111" fill="#10d83c" /><polygon points="598,121 604,119 604,134 597,133" fill="#10c838" /><circle cx="499" cy="81.3" r="3.2" fill="#20f0a0"/><circle cx="543.8" cy="92" r="3.2" fill="#20f0c0"/><circle cx="546.5" cy="70.6" r="2.8" fill="#20e8e0"/><rect x="425" y="195" width="185" height="8" fill="#10f0d0"/><polygon points="552,198 554,182 560,175 566,178 571,186 574,198" fill="#18f4c8" /><polygon points="582,199 586,188 596,185 604,186 604,199" fill="#18f4d8" /><polygon points="526,199 529,188 538,185 549,187 552,199" fill="#28c0ff" /><polygon points="486,199 490,184 498,178 506,170 512,176 514,190 520,199" fill="#30f890" /><ellipse cx="499" cy="192.5" rx="7" ry="4.2" fill="#0a5a12"/><ellipse cx="502" cy="191.5" rx="3" ry="2" fill="#5a0800"/><path d="M425 124.5 L441 122.5 L452 125.3 L463 128.7 L472 133 L477.8 138.7 L480.5 146.4 L481 156.4 L480 167 L474.4 176 L463 185 L452 187 L441 185 L425 180" stroke="#10e8f0" stroke-width="10" fill="none" stroke-linejoin="round"/><polygon points="425,163 440,168 452,169.5 460,166 463.5,158 467,155.5 472,158 476,165 474,176 466,186 452,191 438,191 425,188" fill="#10e0f4" /><path d="M425 124.5 L441 122.5 L452 125.3 L463 128.7 L472 133 L477.8 138.7 L480.5 146.4 L481 156.4 L480 167 L474.4 176 L463 185 L452 187 L441 185 L425 180" stroke="#2878ff" stroke-width="5.6" fill="none" stroke-linejoin="round"/><polygon points="425,168 440,172.5 452,174 462,171 466,164 470,168 469,176 462,183 451,187 438,187 425,184" fill="#2884ff" /><path d="M455 128 L460 134.5" stroke="#10e8f0" stroke-width="3.4"/></g><rect x="431" y="69.6" width="172.6" height="130" filter="url(#nz2)" opacity="0.22"/></g><rect x="448" y="225" width="45.2" height="1.5" fill="#fff"/><text x="470.4" y="221.4" font-size="8.4" font-weight="bold" fill="#fff" text-anchor="middle">6 µm</text></svg>
<div class="a" style="left:603.8px;top:69.4px;width:0.8px;height:173.0px;background:#c9d0c8;"></div>
<div class="a" style="left:741.4px;top:57.2px;width:46.0px;height:8.6px;background:#f3f6f2;box-shadow:inset 0 0 0 0.7px #7d867d;"></div>
<div class="a" style="left:787.4px;top:57.2px;width:6.6px;height:8.6px;background:#e8eee7;box-shadow:inset 0 0 0 0.6px #8a938a;"></div>
<svg class="a" style="left:787.4px;top:57.2px" width="6.6" height="8.6"><path d="M1.5999999999999999 3.5 L5.0 3.5 L3.3 5.9Z" fill="#9aa29a"/></svg>
<div class="a t" style="top:59.4px;height:6.0px;line-height:6.0px;font-size:4.59px;color:#9aa29a;left:743.4px;transform-origin:0 50%;">Fast FLIM</div>
<div class="a t" style="top:69.9px;height:6.0px;line-height:6.0px;font-size:4.59px;color:#1c1c1c;left:706.3px;transform-origin:0 50%;">Select Data Channels:</div>
<div class="a" style="left:712.0px;top:74.4px;width:5.8px;height:5.8px;background:#f8c8c8;"></div>
<div class="a" style="left:712.8px;top:75.2px;width:4.4px;height:4.6px;background:#fff;box-shadow:inset 0 0 0 0.6px #7d867d;"></div>
<div class="a t" style="top:75.2px;height:5.9px;line-height:5.9px;font-size:4.5px;color:#e02020;left:709.2px;transform-origin:0 50%;">0</div>
<div class="a" style="left:722.4px;top:75.2px;width:4.4px;height:4.6px;background:#fff;box-shadow:inset 0 0 0 0.6px #7d867d;"></div>
<div class="a t" style="top:75.2px;height:5.9px;line-height:5.9px;font-size:4.5px;color:#1c1c1c;left:718.8px;transform-origin:0 50%;">1</div>
<div class="a" style="left:732.0px;top:75.2px;width:4.4px;height:4.6px;background:#1f9a3c;box-shadow:inset 0 0 0 0.6px #14642a;"></div>
<div class="a t" style="top:75.2px;height:5.9px;line-height:5.9px;font-size:4.5px;color:#1c1c1c;left:728.4px;transform-origin:0 50%;">2</div>
<div class="a" style="left:741.6px;top:75.2px;width:4.4px;height:4.6px;background:#1f9a3c;box-shadow:inset 0 0 0 0.6px #14642a;"></div>
<div class="a t" style="top:75.2px;height:5.9px;line-height:5.9px;font-size:4.5px;color:#1c1c1c;left:738.0px;transform-origin:0 50%;">3</div>
<div class="a" style="left:751.2px;top:75.2px;width:4.4px;height:4.6px;background:#fff;box-shadow:inset 0 0 0 0.6px #7d867d;"></div>
<div class="a t" style="top:75.2px;height:5.9px;line-height:5.9px;font-size:4.5px;color:#1c1c1c;left:747.6px;transform-origin:0 50%;">4</div>
<div class="a" style="left:760.8px;top:75.2px;width:4.4px;height:4.6px;background:#fff;box-shadow:inset 0 0 0 0.6px #7d867d;"></div>
<div class="a t" style="top:75.2px;height:5.9px;line-height:5.9px;font-size:4.5px;color:#1c1c1c;left:757.2px;transform-origin:0 50%;">5</div>
<div class="a" style="left:770.4px;top:75.2px;width:4.4px;height:4.6px;background:#fff;box-shadow:inset 0 0 0 0.6px #7d867d;"></div>
<div class="a t" style="top:75.2px;height:5.9px;line-height:5.9px;font-size:4.5px;color:#1c1c1c;left:766.8px;transform-origin:0 50%;">6</div>
<div class="a" style="left:780.0px;top:75.2px;width:4.4px;height:4.6px;background:#fff;box-shadow:inset 0 0 0 0.6px #7d867d;"></div>
<div class="a t" style="top:75.2px;height:5.9px;line-height:5.9px;font-size:4.5px;color:#1c1c1c;left:776.4px;transform-origin:0 50%;">7</div>
<div class="a" style="left:789.6px;top:75.2px;width:4.4px;height:4.6px;background:#fff;box-shadow:inset 0 0 0 0.6px #7d867d;"></div>
<div class="a t" style="top:75.2px;height:5.9px;line-height:5.9px;font-size:4.5px;color:#1c1c1c;left:786.0px;transform-origin:0 50%;">8</div>
<div class="a" style="left:706.5px;top:81.0px;width:52.0px;height:8.2px;background:#ffffff;box-shadow:inset 0 0 0 0.7px #7d867d;"></div>
<div class="a" style="left:758.5px;top:81.0px;width:6.8px;height:8.2px;background:#e8eee7;box-shadow:inset 0 0 0 0.6px #8a938a;"></div>
<svg class="a" style="left:758.5px;top:81.0px" width="6.8" height="8.2"><path d="M1.7 3.3 L5.1 3.3 L3.4 5.699999999999999Z" fill="#222"/></svg>
<div class="a t" style="top:83.0px;height:6.0px;line-height:6.0px;font-size:4.59px;color:#1c1c1c;left:708.5px;transform-origin:0 50%;">Events[Cnts]</div>
<svg class="a" style="left:706.5px;top:92.2px" width="84.4" height="9.6" viewBox="0 0 84.4 9.6">
<defs><linearGradient id="g1" x1="0" x2="1"><stop offset="0" stop-color="#000"/><stop offset="0.16" stop-color="#000"/><stop offset="0.2" stop-color="#222"/><stop offset="0.83" stop-color="#fff"/><stop offset="1" stop-color="#fff"/></linearGradient></defs>
<rect width="84.4" height="9.6" fill="url(#g1)"/>
<path d="M13.6 9.6 L13.6 6 L15.5 5.6 L17 4 L20 3 L40 2.8 L55 2.6 L66 3 L70 4.2 L70.5 9.6 Z" fill="#fff"/>
<rect x="70.5" y="3.4" width="13.4" height="6.2" fill="#fff"/>
<path d="M13.4 0 V9.6 M70.6 0 V9.6" stroke="#888" stroke-width="0.6"/><path d="M70.6 3.4 H84" stroke="#555" stroke-width="0.5"/>
<rect x="0.3" y="0.3" width="83.8" height="9" fill="none" stroke="#333" stroke-width="0.6"/></svg>
<div class="a" style="left:707.0px;top:105.0px;width:5.4px;height:5.4px;background:#2ca448;box-shadow:inset 0 0 0 0.7px #1a7030;"></div>
<svg class="a" style="left:707.0px;top:105.0px" width="5.4" height="5.4"><path d="M1.2 2.7 L2.2680000000000002 4.212000000000001 L4.4 1.1880000000000002" stroke="#0a3814" stroke-width="1.0" fill="none"/></svg>
<div class="a t" style="top:105.7px;height:6.0px;line-height:6.0px;font-size:4.59px;color:#1c1c1c;left:714.0px;transform-origin:0 50%;">Min</div>
<div class="a" style="left:721.6px;top:103.8px;width:17.4px;height:8.2px;background:#ffffff;box-shadow:inset 0 0 0 0.7px #8a938a;"></div>
<div class="a t" style="top:105.8px;height:6.0px;line-height:6.0px;font-size:4.59px;color:#1c1c1c;left:537.0px;width:200px;text-align:right;transform-origin:100% 50%;">81</div>
<div class="a" style="left:739.0px;top:103.8px;width:6.8px;height:4.1px;background:#e8eee7;box-shadow:inset 0 0 0 0.5px #8a938a;"></div>
<div class="a" style="left:739.0px;top:107.9px;width:6.8px;height:4.1px;background:#e8eee7;box-shadow:inset 0 0 0 0.5px #8a938a;"></div>
<svg class="a" style="left:739.0px;top:103.8px" width="6.8" height="8.2"><path d="M1.7999999999999998 2.8 L3.4 0.8999999999999995 L5.0 2.8Z M1.7999999999999998 5.3999999999999995 L3.4 7.3 L5.0 5.3999999999999995Z" fill="#222"/></svg>
<div class="a" style="left:751.4px;top:105.0px;width:5.4px;height:5.4px;background:#2ca448;box-shadow:inset 0 0 0 0.7px #1a7030;"></div>
<svg class="a" style="left:751.4px;top:105.0px" width="5.4" height="5.4"><path d="M1.2 2.7 L2.2680000000000002 4.212000000000001 L4.4 1.1880000000000002" stroke="#0a3814" stroke-width="1.0" fill="none"/></svg>
<div class="a t" style="top:105.7px;height:6.0px;line-height:6.0px;font-size:4.59px;color:#1c1c1c;left:758.6px;transform-origin:0 50%;">Max</div>
<div class="a" style="left:766.4px;top:103.8px;width:17.6px;height:8.2px;background:#ffffff;box-shadow:inset 0 0 0 0.7px #8a938a;"></div>
<div class="a t" style="top:105.8px;height:6.0px;line-height:6.0px;font-size:4.59px;color:#1c1c1c;left:582.0px;width:200px;text-align:right;transform-origin:100% 50%;">976</div>
<div class="a" style="left:784.0px;top:103.8px;width:6.8px;height:4.1px;background:#e8eee7;box-shadow:inset 0 0 0 0.5px #8a938a;"></div>
<div class="a" style="left:784.0px;top:107.9px;width:6.8px;height:4.1px;background:#e8eee7;box-shadow:inset 0 0 0 0.5px #8a938a;"></div>
<svg class="a" style="left:784.0px;top:103.8px" width="6.8" height="8.2"><path d="M1.7999999999999998 2.8 L3.4 0.8999999999999995 L5.0 2.8Z M1.7999999999999998 5.3999999999999995 L3.4 7.3 L5.0 5.3999999999999995Z" fill="#222"/></svg>
<div class="a" style="left:706.5px;top:126.4px;width:52.4px;height:7.8px;background:#ffffff;box-shadow:inset 0 0 0 0.7px #7d867d;"></div>
<div class="a" style="left:758.9px;top:126.4px;width:6.8px;height:7.8px;background:#e8eee7;box-shadow:inset 0 0 0 0.6px #8a938a;"></div>
<svg class="a" style="left:758.9px;top:126.4px" width="6.8" height="7.8"><path d="M1.7 3.0999999999999996 L5.1 3.0999999999999996 L3.4 5.5Z" fill="#222"/></svg>
<div class="a t" style="top:128.3px;height:5.9px;line-height:5.9px;font-size:4.5px;color:#1c1c1c;left:708.5px;transform-origin:0 50%;">Average life time[ns]</div>
<svg class="a" style="left:706.5px;top:137px" width="84.4" height="10.2" viewBox="0 0 84.4 10.2">
<defs><linearGradient id="g2" x1="0" x2="1"><stop offset="0" stop-color="#0000f0"/><stop offset="0.16" stop-color="#0000ff"/><stop offset="0.3" stop-color="#00a0ff"/><stop offset="0.45" stop-color="#00e0a0"/><stop offset="0.6" stop-color="#60e000"/><stop offset="0.72" stop-color="#f0e000"/><stop offset="0.82" stop-color="#ff6000"/><stop offset="0.86" stop-color="#f00000"/><stop offset="1" stop-color="#e00000"/></linearGradient></defs>
<rect width="84.4" height="10.2" fill="url(#g2)"/>
<path d="M13.6 10.2 L13.6 6.5 L15.5 6 L17.5 4 L20 3 L40 2.8 L55 2.6 L66 3 L70 4.2 L70.5 10.2 Z" fill="#fff"/>
<rect x="70.5" y="3.6" width="13.6" height="6.6" fill="#fff"/>
<path d="M13.4 0 V10.2 M70.6 0 V10.2" stroke="#ddd" stroke-width="0.6"/><path d="M70.6 3.6 H84" stroke="#555" stroke-width="0.5"/>
<rect x="0.3" y="0.3" width="83.8" height="9.6" fill="none" stroke="#555" stroke-width="0.5"/></svg>
<div class="a" style="left:707.0px;top:149.8px;width:5.4px;height:5.4px;background:#2ca448;box-shadow:inset 0 0 0 0.7px #1a7030;"></div>
<svg class="a" style="left:707.0px;top:149.8px" width="5.4" height="5.4"><path d="M1.2 2.7 L2.2680000000000002 4.212000000000001 L4.4 1.1880000000000002" stroke="#0a3814" stroke-width="1.0" fill="none"/></svg>
<div class="a t" style="top:150.5px;height:6.0px;line-height:6.0px;font-size:4.59px;color:#1c1c1c;left:714.0px;transform-origin:0 50%;">Min</div>
<div class="a" style="left:721.6px;top:148.6px;width:17.4px;height:8.2px;background:#ffffff;box-shadow:inset 0 0 0 0.7px #8a938a;"></div>
<div class="a t" style="top:150.6px;height:6.0px;line-height:6.0px;font-size:4.59px;color:#1c1c1c;left:537.0px;width:200px;text-align:right;transform-origin:100% 50%;">1,520</div>
<div class="a" style="left:739.0px;top:148.6px;width:6.8px;height:4.1px;background:#e8eee7;box-shadow:inset 0 0 0 0.5px #8a938a;"></div>
<div class="a" style="left:739.0px;top:152.7px;width:6.8px;height:4.1px;background:#e8eee7;box-shadow:inset 0 0 0 0.5px #8a938a;"></div>
<svg class="a" style="left:739.0px;top:148.6px" width="6.8" height="8.2"><path d="M1.7999999999999998 2.8 L3.4 0.8999999999999995 L5.0 2.8Z M1.7999999999999998 5.3999999999999995 L3.4 7.3 L5.0 5.3999999999999995Z" fill="#222"/></svg>
<div class="a" style="left:751.4px;top:149.8px;width:5.4px;height:5.4px;background:#2ca448;box-shadow:inset 0 0 0 0.7px #1a7030;"></div>
<svg class="a" style="left:751.4px;top:149.8px" width="5.4" height="5.4"><path d="M1.2 2.7 L2.2680000000000002 4.212000000000001 L4.4 1.1880000000000002" stroke="#0a3814" stroke-width="1.0" fill="none"/></svg>
<div class="a t" style="top:150.5px;height:6.0px;line-height:6.0px;font-size:4.59px;color:#1c1c1c;left:758.6px;transform-origin:0 50%;">Max</div>
<div class="a" style="left:766.4px;top:148.6px;width:17.6px;height:8.2px;background:#ffffff;box-shadow:inset 0 0 0 0.7px #8a938a;"></div>
<div class="a t" style="top:150.6px;height:6.0px;line-height:6.0px;font-size:4.59px;color:#1c1c1c;left:582.0px;width:200px;text-align:right;transform-origin:100% 50%;">4,388</div>
<div class="a" style="left:784.0px;top:148.6px;width:6.8px;height:4.1px;background:#e8eee7;box-shadow:inset 0 0 0 0.5px #8a938a;"></div>
<div class="a" style="left:784.0px;top:152.7px;width:6.8px;height:4.1px;background:#e8eee7;box-shadow:inset 0 0 0 0.5px #8a938a;"></div>
<svg class="a" style="left:784.0px;top:148.6px" width="6.8" height="8.2"><path d="M1.7999999999999998 2.8 L3.4 0.8999999999999995 L5.0 2.8Z M1.7999999999999998 5.3999999999999995 L3.4 7.3 L5.0 5.3999999999999995Z" fill="#222"/></svg>
<div class="a" style="left:706.3px;top:170.8px;width:86.4px;height:72.4px;background:#ffffff;box-shadow:inset 0 0 0 0.7px #98a198;"></div>
<div class="a" style="left:706.9px;top:171.4px;width:41.4px;height:8.5px;background:#e4ebe3;box-shadow:inset 0 0 0 0.6px #a2aba2;"></div>
<div class="a" style="left:748.7px;top:171.4px;width:43.4px;height:8.3px;background:#1fa13f;"></div>
<div class="a t" style="top:173.3px;height:6.0px;line-height:6.0px;font-size:4.59px;color:#1c1c1c;left:709.9px;transform-origin:0 50%;">Max Photons</div>
<div class="a t" style="top:173.3px;height:6.0px;line-height:6.0px;font-size:4.59px;color:#eafaee;left:751.5px;transform-origin:0 50%;">2104 Cnts</div>
<div class="a" style="left:706.9px;top:180.1px;width:41.4px;height:8.5px;background:#e4ebe3;box-shadow:inset 0 0 0 0.6px #a2aba2;"></div>
<div class="a" style="left:748.3px;top:188.2px;width:43.8px;height:0.5px;background:#e2e6e2;"></div>
<div class="a t" style="top:182.0px;height:6.0px;line-height:6.0px;font-size:4.59px;color:#1c1c1c;left:709.9px;transform-origin:0 50%;">Max Countrate</div>
<div class="a t" style="top:182.0px;height:6.0px;line-height:6.0px;font-size:4.59px;color:#1c1c1c;left:751.5px;transform-origin:0 50%;">1052,0 kcps</div>
<div class="a" style="left:706.9px;top:188.8px;width:41.4px;height:8.5px;background:#e4ebe3;box-shadow:inset 0 0 0 0.6px #a2aba2;"></div>
<div class="a" style="left:748.3px;top:196.9px;width:43.8px;height:0.5px;background:#e2e6e2;"></div>
<div class="a t" style="top:190.7px;height:6.0px;line-height:6.0px;font-size:4.59px;color:#1c1c1c;left:709.9px;transform-origin:0 50%;">Avg Photons</div>
<div class="a t" style="top:190.7px;height:6.0px;line-height:6.0px;font-size:4.59px;color:#1c1c1c;left:751.5px;transform-origin:0 50%;">547 Cnts</div>
<div class="a" style="left:706.9px;top:197.5px;width:41.4px;height:8.5px;background:#e4ebe3;box-shadow:inset 0 0 0 0.6px #a2aba2;"></div>
<div class="a" style="left:748.3px;top:205.6px;width:43.8px;height:0.5px;background:#e2e6e2;"></div>
<div class="a t" style="top:199.4px;height:6.0px;line-height:6.0px;font-size:4.59px;color:#1c1c1c;left:709.9px;transform-origin:0 50%;">Avg Countrate</div>
<div class="a t" style="top:199.4px;height:6.0px;line-height:6.0px;font-size:4.59px;color:#1c1c1c;left:751.5px;transform-origin:0 50%;">273,5 kcps</div>
<div class="a" style="left:795.2px;top:56.0px;width:0.8px;height:390.0px;background:#b4bcb3;"></div>
<div class="a" style="left:429.0px;top:244.6px;width:366.0px;height:0.9px;background:#c0cac0;"></div>
<div class="a" style="left:432.6px;top:247.6px;width:5.4px;height:5.4px;background:#2ca448;box-shadow:inset 0 0 0 0.7px #1a7030;"></div>
<svg class="a" style="left:432.6px;top:247.6px" width="5.4" height="5.4"><path d="M1.2 2.7 L2.2680000000000002 4.212000000000001 L4.4 1.1880000000000002" stroke="#0a3814" stroke-width="1.0" fill="none"/></svg>
<div class="a t" style="top:248.1px;height:6.0px;line-height:6.0px;font-size:4.59px;color:#1c1c1c;left:439.4px;transform-origin:0 50%;">active</div>
<div class="a t" style="top:248.1px;height:6.0px;line-height:6.0px;font-size:4.59px;color:#1c1c1c;left:454.4px;transform-origin:0 50%;">refresh:</div>
<div class="a" style="left:473.0px;top:247.8px;width:5.2px;height:5.2px;background:#ffffff;box-shadow:inset 0 0 0 0.7px #7d867d;border-radius:2.6px;"></div>
<div class="a t" style="top:248.1px;height:6.0px;line-height:6.0px;font-size:4.59px;color:#1c1c1c;left:480.2px;transform-origin:0 50%;">0,1 s</div>
<div class="a" style="left:495.8px;top:247.8px;width:5.2px;height:5.2px;background:#ffffff;box-shadow:inset 0 0 0 0.7px #7d867d;border-radius:2.6px;"></div>
<div class="a" style="left:496.6px;top:248.6px;width:3.6px;height:3.6px;background:#1a8a35;border-radius:2.6px;"></div>
<div class="a" style="left:497.4px;top:249.4px;width:2.0px;height:2.0px;background:#0a4a1a;border-radius:1px;"></div>
<div class="a t" style="top:248.1px;height:6.0px;line-height:6.0px;font-size:4.59px;color:#1c1c1c;left:503.0px;transform-origin:0 50%;">1,0 s</div>
<div class="a t" style="top:248.1px;height:6.0px;line-height:6.0px;font-size:4.59px;color:#1c1c1c;left:519.0px;transform-origin:0 50%;">Running</div>
<div class="a" style="left:741.4px;top:246.4px;width:46.0px;height:8.2px;background:#f3f6f2;box-shadow:inset 0 0 0 0.7px #7d867d;"></div>
<div class="a" style="left:787.4px;top:246.4px;width:6.6px;height:8.2px;background:#e8eee7;box-shadow:inset 0 0 0 0.6px #8a938a;"></div>
<svg class="a" style="left:787.4px;top:246.4px" width="6.6" height="8.2"><path d="M1.5999999999999999 3.3 L5.0 3.3 L3.3 5.699999999999999Z" fill="#9aa29a"/></svg>
<div class="a t" style="top:248.4px;height:6.0px;line-height:6.0px;font-size:4.59px;color:#9aa29a;left:743.4px;transform-origin:0 50%;">TimeTrace</div>
<div class="a t" style="top:259.9px;height:6.0px;line-height:6.0px;font-size:4.59px;color:#1c1c1c;left:706.3px;transform-origin:0 50%;">Select Data Channels:</div>
<div class="a" style="left:706.5px;top:269.8px;width:31.6px;height:8.4px;background:#f3f6f2;box-shadow:inset 0 0 0 0.7px #7d867d;"></div>
<div class="a" style="left:738.1px;top:269.8px;width:6.6px;height:8.4px;background:#e8eee7;box-shadow:inset 0 0 0 0.6px #8a938a;"></div>
<svg class="a" style="left:738.1px;top:269.8px" width="6.6" height="8.4"><path d="M1.5999999999999999 3.4000000000000004 L5.0 3.4000000000000004 L3.3 5.800000000000001Z" fill="#9aa29a"/></svg>
<div class="a t" style="top:271.9px;height:6.0px;line-height:6.0px;font-size:4.59px;color:#a6aea6;left:708.5px;transform-origin:0 50%;">2</div>
<div class="a" style="left:748.6px;top:269.8px;width:35.6px;height:8.4px;background:#f3f6f2;box-shadow:inset 0 0 0 0.7px #7d867d;"></div>
<div class="a" style="left:784.2px;top:269.8px;width:6.6px;height:8.4px;background:#e8eee7;box-shadow:inset 0 0 0 0.6px #8a938a;"></div>
<svg class="a" style="left:784.2px;top:269.8px" width="6.6" height="8.4"><path d="M1.5999999999999999 3.4000000000000004 L5.0 3.4000000000000004 L3.3 5.800000000000001Z" fill="#9aa29a"/></svg>
<div class="a t" style="top:271.9px;height:6.0px;line-height:6.0px;font-size:4.59px;color:#a6aea6;left:750.6px;transform-origin:0 50%;">3</div>
<div class="a" style="left:706.9px;top:284.0px;width:85.8px;height:28.0px;box-shadow:inset 0 0 0 0.8px #626b62;"></div>
<div class="a t" style="left:710.3px;top:281.8px;height:5.7px;line-height:5.7px;font-size:4.38px;color:#1c1c1c;background:#dfe8df;padding:0 0.6px;transform-origin:0 50%">Y-Axis</div>
<div class="a" style="left:710.6px;top:291.4px;width:5.6px;height:5.6px;background:#2ca448;box-shadow:inset 0 0 0 0.7px #1a7030;"></div>
<svg class="a" style="left:710.6px;top:291.4px" width="5.6" height="5.6"><path d="M1.2 2.8 L2.352 4.367999999999999 L4.6 1.232" stroke="#0a3814" stroke-width="1.0" fill="none"/></svg>
<div class="a t" style="top:292.1px;height:6.0px;line-height:6.0px;font-size:4.59px;color:#1c1c1c;left:718.0px;transform-origin:0 50%;">Min</div>
<div class="a" style="left:750.6px;top:291.4px;width:5.6px;height:5.6px;background:#ffffff;box-shadow:inset 0 0 0 0.7px #7d867d;"></div>
<div class="a t" style="top:292.1px;height:6.0px;line-height:6.0px;font-size:4.59px;color:#1c1c1c;left:758.4px;transform-origin:0 50%;">Max</div>
<div class="a" style="left:708.0px;top:300.4px;width:33.2px;height:9.0px;background:#ffffff;box-shadow:inset 0 0 0 0.7px #8a938a;"></div>
<div class="a t" style="top:302.8px;height:6.0px;line-height:6.0px;font-size:4.59px;color:#1c1c1c;left:539.2px;width:200px;text-align:right;transform-origin:100% 50%;">0,0&nbsp; kcps</div>
<div class="a" style="left:741.2px;top:300.4px;width:6.6px;height:4.5px;background:#e8eee7;box-shadow:inset 0 0 0 0.5px #8a938a;"></div>
<div class="a" style="left:741.2px;top:304.9px;width:6.6px;height:4.5px;background:#e8eee7;box-shadow:inset 0 0 0 0.5px #8a938a;"></div>
<svg class="a" style="left:741.2px;top:300.4px" width="6.6" height="9.0"><path d="M1.6999999999999997 3.2 L3.3 1.2999999999999998 L4.9 3.2Z M1.6999999999999997 5.8 L3.3 7.7 L4.9 5.8Z" fill="#222"/></svg>
<div class="a" style="left:750.0px;top:300.4px;width:42.0px;height:9.0px;background:#e4ebe3;box-shadow:inset 0 0 0 0.6px #8d968d;"></div>
<div class="a t" style="top:302.8px;height:6.0px;line-height:6.0px;font-size:4.59px;color:#1c1c1c;left:590.0px;width:200px;text-align:right;transform-origin:100% 50%;">541,6&nbsp; kcps&nbsp;</div>
<div class="a t" style="top:316.1px;height:6.0px;line-height:6.0px;font-size:4.59px;color:#1c1c1c;left:706.3px;transform-origin:0 50%;">Time per Point</div>
<div class="a" style="left:748.6px;top:315.0px;width:43.0px;height:8.2px;background:#e4ebe3;box-shadow:inset 0 0 0 0.6px #8d968d;"></div>
<div class="a t" style="top:317.0px;height:6.0px;line-height:6.0px;font-size:4.59px;color:#1c1c1c;left:589.6px;width:200px;text-align:right;transform-origin:100% 50%;">100,0&nbsp; ms</div>
<div class="a" style="left:706.3px;top:336.8px;width:86.4px;height:94.2px;background:#ffffff;box-shadow:inset 0 0 0 0.7px #98a198;"></div>
<div class="a" style="left:706.9px;top:337.4px;width:41.4px;height:8.5px;background:#e4ebe3;box-shadow:inset 0 0 0 0.6px #a2aba2;"></div>
<div class="a" style="left:748.7px;top:337.4px;width:43.4px;height:8.3px;background:#1fa13f;"></div>
<div class="a t" style="top:339.3px;height:6.0px;line-height:6.0px;font-size:4.59px;color:#1c1c1c;left:709.9px;transform-origin:0 50%;">Data Channel</div>
<div class="a t" style="top:339.3px;height:6.0px;line-height:6.0px;font-size:4.59px;color:#eafaee;left:751.5px;transform-origin:0 50%;">2</div>
<div class="a" style="left:706.9px;top:346.1px;width:41.4px;height:8.5px;background:#e4ebe3;box-shadow:inset 0 0 0 0.6px #a2aba2;"></div>
<div class="a" style="left:748.3px;top:354.2px;width:43.8px;height:0.5px;background:#e2e6e2;"></div>
<div class="a t" style="top:348.0px;height:6.0px;line-height:6.0px;font-size:4.59px;color:#1c1c1c;left:709.9px;transform-origin:0 50%;">Max</div>
<div class="a t" style="top:348.0px;height:6.0px;line-height:6.0px;font-size:4.59px;color:#1c1c1c;left:751.5px;transform-origin:0 50%;">461,0 kcps</div>
<div class="a" style="left:706.9px;top:354.8px;width:41.4px;height:8.5px;background:#e4ebe3;box-shadow:inset 0 0 0 0.6px #a2aba2;"></div>
<div class="a" style="left:748.3px;top:363.0px;width:43.8px;height:0.5px;background:#e2e6e2;"></div>
<div class="a t" style="top:356.7px;height:6.0px;line-height:6.0px;font-size:4.59px;color:#1c1c1c;left:709.9px;transform-origin:0 50%;">Average</div>
<div class="a t" style="top:356.7px;height:6.0px;line-height:6.0px;font-size:4.59px;color:#1c1c1c;left:751.5px;transform-origin:0 50%;">97,2 kcps</div>
<div class="a" style="left:706.9px;top:363.6px;width:41.4px;height:8.5px;background:#e4ebe3;box-shadow:inset 0 0 0 0.6px #a2aba2;"></div>
<div class="a" style="left:748.3px;top:371.7px;width:43.8px;height:0.5px;background:#e2e6e2;"></div>
<div class="a t" style="top:365.4px;height:6.0px;line-height:6.0px;font-size:4.59px;color:#1c1c1c;left:709.9px;transform-origin:0 50%;">-</div>
<div class="a t" style="top:365.4px;height:6.0px;line-height:6.0px;font-size:4.59px;color:#1c1c1c;left:751.5px;transform-origin:0 50%;"></div>
<div class="a" style="left:706.9px;top:372.3px;width:41.4px;height:8.5px;background:#e4ebe3;box-shadow:inset 0 0 0 0.6px #a2aba2;"></div>
<div class="a" style="left:748.3px;top:380.4px;width:43.8px;height:0.5px;background:#e2e6e2;"></div>
<div class="a t" style="top:374.2px;height:6.0px;line-height:6.0px;font-size:4.59px;color:#1c1c1c;left:709.9px;transform-origin:0 50%;">Data Channel</div>
<div class="a t" style="top:374.2px;height:6.0px;line-height:6.0px;font-size:4.59px;color:#1c1c1c;left:751.5px;transform-origin:0 50%;">3</div>
<div class="a" style="left:706.9px;top:381.0px;width:41.4px;height:8.5px;background:#e4ebe3;box-shadow:inset 0 0 0 0.6px #a2aba2;"></div>
<div class="a" style="left:748.3px;top:389.1px;width:43.8px;height:0.5px;background:#e2e6e2;"></div>
<div class="a t" style="top:382.9px;height:6.0px;line-height:6.0px;font-size:4.59px;color:#1c1c1c;left:709.9px;transform-origin:0 50%;">Max</div>
<div class="a t" style="top:382.9px;height:6.0px;line-height:6.0px;font-size:4.59px;color:#1c1c1c;left:751.5px;transform-origin:0 50%;">631,5 kcps</div>
<div class="a" style="left:706.9px;top:389.7px;width:41.4px;height:8.5px;background:#e4ebe3;box-shadow:inset 0 0 0 0.6px #a2aba2;"></div>
<div class="a" style="left:748.3px;top:397.8px;width:43.8px;height:0.5px;background:#e2e6e2;"></div>
<div class="a t" style="top:391.6px;height:6.0px;line-height:6.0px;font-size:4.59px;color:#1c1c1c;left:709.9px;transform-origin:0 50%;">Average</div>
<div class="a t" style="top:391.6px;height:6.0px;line-height:6.0px;font-size:4.59px;color:#1c1c1c;left:751.5px;transform-origin:0 50%;">175,3 kcps</div>
<div class="a" style="left:429.0px;top:432.6px;width:366.0px;height:0.7px;background:#c2c9c1;"></div>
<div class="a t" style="top:437.2px;height:6.1px;line-height:6.1px;font-size:4.7px;color:#9aa29a;left:502.0px;width:200px;text-align:right;transform-origin:100% 50%;">Select and arrange multiple online analyses:</div>
<div class="a" style="left:710.4px;top:435.4px;width:10.2px;height:8.6px;background:#e6ece5;box-shadow:inset 0 0 0 0.6px #9aa39a;"></div>
<div class="a" style="left:712.8px;top:437.4px;width:5.4px;height:1.8px;background:#555;"></div>
<div class="a" style="left:720.8px;top:435.4px;width:10.2px;height:8.6px;background:#e6ece5;box-shadow:inset 0 0 0 0.6px #9aa39a;"></div>
<div class="a" style="left:724.8px;top:437.4px;width:2.2px;height:4.8px;background:#666;"></div>
<div class="a" style="left:731.2px;top:435.4px;width:10.2px;height:8.6px;background:#e6ece5;box-shadow:inset 0 0 0 0.6px #9aa39a;"></div>
<div class="a" style="left:733.6px;top:437.2px;width:5.6px;height:5.2px;background:#8c948c;box-shadow:inset 0 0 0 0.5px #5c645c;"></div>
<div class="a" style="left:741.6px;top:435.4px;width:10.2px;height:8.6px;background:#e6ece5;box-shadow:inset 0 0 0 0.6px #9aa39a;"></div>
<div class="a" style="left:744.0px;top:437.2px;width:5.6px;height:5.2px;background:#8c948c;box-shadow:inset 0 0 0 0.5px #5c645c;"></div>
<div class="a" style="left:752.0px;top:435.4px;width:10.2px;height:8.6px;background:#e6ece5;box-shadow:inset 0 0 0 0.6px #9aa39a;"></div>
<div class="a" style="left:754.4px;top:437.2px;width:5.6px;height:5.2px;background:#8c948c;box-shadow:inset 0 0 0 0.5px #5c645c;"></div>
<div class="a" style="left:762.4px;top:435.4px;width:10.2px;height:8.6px;background:#e6ece5;box-shadow:inset 0 0 0 0.6px #9aa39a;"></div>
<div class="a" style="left:764.8px;top:437.2px;width:5.6px;height:5.2px;background:#8c948c;box-shadow:inset 0 0 0 0.5px #5c645c;"></div>
<div class="a" style="left:772.8px;top:435.4px;width:10.2px;height:8.6px;background:#e6ece5;box-shadow:inset 0 0 0 0.6px #9aa39a;"></div>
<div class="a" style="left:775.2px;top:437.2px;width:5.6px;height:5.2px;background:#8c948c;box-shadow:inset 0 0 0 0.5px #5c645c;"></div>
<div class="a" style="left:783.2px;top:435.4px;width:10.2px;height:8.6px;background:#e6ece5;box-shadow:inset 0 0 0 0.6px #9aa39a;"></div>
<div class="a" style="left:785.6px;top:437.2px;width:5.6px;height:5.2px;background:#8c948c;box-shadow:inset 0 0 0 0.5px #5c645c;"></div>
<svg class="a" style="left:0;top:0;font-family:'Liberation Sans',sans-serif" width="800" height="450"><rect x="430.8" y="257" width="273.8" height="174" fill="#fff"/><path d="M462.20 261.4 V409 M466.91 261.4 V409 M471.62 261.4 V409 M481.02 261.4 V409 M485.73 261.4 V409 M490.44 261.4 V409 M499.85 261.4 V409 M504.55 261.4 V409 M509.25 261.4 V409 M518.66 261.4 V409 M523.37 261.4 V409 M528.08 261.4 V409 M537.49 261.4 V409 M542.19 261.4 V409 M546.89 261.4 V409 M556.31 261.4 V409 M561.01 261.4 V409 M565.72 261.4 V409 M575.12 261.4 V409 M579.83 261.4 V409 M584.53 261.4 V409 M593.95 261.4 V409 M598.65 261.4 V409 M603.36 261.4 V409 M612.76 261.4 V409 M617.47 261.4 V409 M622.17 261.4 V409 M631.59 261.4 V409 M636.29 261.4 V409 M641.00 261.4 V409 M650.40 261.4 V409 M655.11 261.4 V409 M659.82 261.4 V409 M669.23 261.4 V409 M673.93 261.4 V409 M678.63 261.4 V409 M688.05 261.4 V409 M692.75 261.4 V409 M697.46 261.4 V409 M454.6 406.27 H702 M454.6 403.55 H702 M454.6 400.82 H702 M454.6 395.38 H702 M454.6 392.65 H702 M454.6 389.93 H702 M454.6 384.48 H702 M454.6 381.75 H702 M454.6 379.02 H702 M454.6 373.57 H702 M454.6 370.85 H702 M454.6 368.12 H702 M454.6 362.68 H702 M454.6 359.95 H702 M454.6 357.23 H702 M454.6 351.77 H702 M454.6 349.05 H702 M454.6 346.32 H702 M454.6 340.88 H702 M454.6 338.15 H702 M454.6 335.43 H702 M454.6 329.98 H702 M454.6 327.25 H702 M454.6 324.52 H702 M454.6 319.07 H702 M454.6 316.35 H702 M454.6 313.62 H702 M454.6 308.18 H702 M454.6 305.45 H702 M454.6 302.73 H702 M454.6 297.27 H702 M454.6 294.55 H702 M454.6 291.82 H702 M454.6 286.38 H702 M454.6 283.65 H702 M454.6 280.92 H702 M454.6 275.48 H702 M454.6 272.75 H702 M454.6 270.02 H702 M454.6 264.57 H702 M454.6 261.85 H702" stroke="#e0e0e0" stroke-width="0.55" fill="none"/><path d="M457.50 261.4 V409 M476.32 261.4 V409 M495.14 261.4 V409 M513.96 261.4 V409 M532.78 261.4 V409 M551.60 261.4 V409 M570.42 261.4 V409 M589.24 261.4 V409 M608.06 261.4 V409 M626.88 261.4 V409 M645.70 261.4 V409 M664.52 261.4 V409 M683.34 261.4 V409 M454.6 409.00 H702 M454.6 398.10 H702 M454.6 387.20 H702 M454.6 376.30 H702 M454.6 365.40 H702 M454.6 354.50 H702 M454.6 343.60 H702 M454.6 332.70 H702 M454.6 321.80 H702 M454.6 310.90 H702 M454.6 300.00 H702 M454.6 289.10 H702 M454.6 278.20 H702 M454.6 267.30 H702" stroke="#a8a8a8" stroke-width="0.65" fill="none"/><rect x="454.6" y="261.4" width="247.39999999999998" height="147.60000000000002" fill="none" stroke="#555" stroke-width="0.7"/><path d="M458.0 379.0 L458.4 395.0 L459.0 394.0 L459.6 394.0 L460.3 390.1 L461.0 386.0 L461.7 380.7 L462.4 376.0 L463.0 371.2 L463.6 366.0 L464.3 363.3 L465.0 360.0 L465.7 358.1 L466.4 358.0 L467.2 354.0 L468.0 352.0 L468.8 350.7 L469.6 348.0 L470.3 346.0 L471.0 345.0 L471.7 342.5 L472.4 341.0 L473.2 341.0 L474.0 339.0 L474.8 336.9 L475.6 335.0 L476.3 338.2 L477.0 340.0 L477.7 338.0 L478.4 336.0 L479.2 337.3 L480.0 338.0 L480.7 334.3 L481.4 332.0 L482.0 335.3 L482.6 338.0 L483.3 339.7 L484.0 340.0 L484.8 341.0 L485.6 342.0 L486.3 342.0 L487.0 341.0 L487.7 343.3 L488.4 345.0 L489.2 342.6 L490.0 342.0 L490.7 345.0 L491.4 347.0 L492.2 344.2 L493.0 341.0 L493.7 341.6 L494.4 343.0 L495.0 345.1 L495.6 349.0 L496.3 351.2 L497.0 352.0 L497.7 353.4 L498.4 355.0 L499.2 353.9 L500.0 352.0 L500.8 351.3 L501.6 349.0 L502.3 346.9 L503.0 344.0 L503.7 346.3 L504.4 347.0 L505.2 345.8 L506.0 345.0 L506.7 343.6 L507.3 340.9 L508.0 339.0 L509.0 349.0 L509.7 348.9 L510.4 347.0 L511.2 348.8 L512.0 349.0 L512.7 347.5 L513.3 346.9 L514.0 347.0 L514.8 348.4 L515.6 351.0 L516.3 349.9 L517.0 347.0 L517.7 347.9 L518.4 349.0 L519.2 348.3 L520.0 347.0 L520.8 347.6 L521.6 349.0 L522.3 351.5 L523.0 354.0 L523.7 356.8 L524.4 360.0 L525.2 361.7 L526.0 364.0 L526.8 363.2 L527.6 362.0 L528.3 364.2 L529.0 366.0 L529.7 365.3 L530.4 363.0 L531.2 361.9 L532.0 360.0 L532.8 363.9 L533.6 366.0 L534.3 365.7 L535.0 364.0 L535.7 368.0 L536.4 370.0 L537.0 373.8 L537.6 377.0 L538.3 379.3 L539.0 383.0 L539.7 384.7 L540.4 385.0 L541.2 384.4 L542.0 382.0 L542.8 380.8 L543.6 378.0 L544.3 376.6 L545.0 375.0 L545.7 373.9 L546.4 372.0 L547.2 370.4 L548.0 370.0 L548.8 372.2 L549.6 373.0 L550.3 372.6 L551.0 372.0 L551.7 374.1 L552.4 377.0 L553.2 377.6 L554.0 380.0 L554.8 378.7 L555.6 376.0 L556.3 375.0 L557.0 372.0 L557.7 369.7 L558.4 369.0 L559.2 371.6 L560.0 373.0 L560.8 373.8 L561.6 375.0 L562.3 375.3 L563.0 377.0 L563.7 374.6 L564.4 373.0 L565.2 372.0 L566.0 370.0 L566.8 369.2 L567.6 367.0 L568.3 365.6 L569.0 366.0 L569.7 364.7 L570.4 363.0 L571.2 363.1 L572.0 365.0 L572.8 362.9 L573.6 360.0 L574.3 360.2 L575.0 361.0 L576.0 355.0 L576.8 359.3 L577.6 362.0 L578.3 364.5 L579.0 365.0 L579.7 366.0 L580.4 367.0 L581.2 368.5 L582.0 368.0 L582.8 369.6 L583.6 372.0 L584.3 372.2 L585.0 374.0 L585.7 373.9 L586.3 372.4 L587.0 373.0 L587.7 372.4 L588.3 372.8 L589.0 373.0 L589.7 371.7 L590.4 370.0 L591.2 368.3 L592.0 368.0 L592.8 367.6 L593.6 369.0 L594.3 370.2 L595.0 370.0 L595.7 371.1 L596.4 373.0 L597.2 374.9 L598.0 375.0 L598.8 376.3 L599.6 376.0 L600.3 374.3 L601.0 373.0 L601.7 372.4 L602.4 372.0 L603.2 371.5 L604.0 371.0 L604.8 372.3 L605.6 373.0 L606.3 372.7 L607.0 372.0 L607.7 373.1 L608.4 374.0 L609.2 374.2 L610.0 374.0 L610.8 374.4 L611.6 373.0 L612.3 372.5 L613.0 372.0 L613.7 373.4 L614.4 375.0 L615.2 376.9 L616.0 378.0 L616.8 378.0 L617.6 379.0 L618.3 377.1 L619.0 376.0 L619.7 377.5 L620.4 377.0 L621.2 375.0 L622.0 373.0 L622.8 374.1 L623.6 375.0 L624.3 371.5 L625.0 370.0 L625.7 367.8 L626.4 366.0 L627.2 363.2 L628.0 360.0 L628.8 360.0 L629.6 362.0 L630.3 362.7 L631.0 363.0 L631.7 362.8 L632.4 362.0 L633.2 362.1 L634.0 364.0 L634.8 365.8 L635.6 367.0 L636.3 369.4 L637.0 372.0 L637.7 374.4 L638.4 376.0 L639.2 377.2 L640.0 379.0 L641.0 380.0 L641.7 378.9 L642.4 377.0 L643.2 376.5 L644.0 375.0 L644.8 375.0 L645.6 377.0 L646.3 374.6 L647.0 374.0 L647.7 373.9 L648.4 373.0 L649.2 371.9 L650.0 369.0 L650.8 366.5 L651.6 365.0 L652.3 363.9 L653.0 363.0 L653.7 365.2 L654.4 367.0 L655.2 366.1 L656.0 366.0 L656.8 367.7 L657.6 370.0 L658.3 370.6 L659.0 372.0 L659.7 371.2 L660.4 371.0 L661.2 370.2 L662.0 369.0 L662.8 365.6 L663.6 363.0 L664.3 360.3 L665.0 358.0 L665.7 357.5 L666.4 356.0 L667.2 355.6 L668.0 357.0 L668.8 360.1 L669.6 363.0 L670.3 360.0 L671.0 356.0 L671.7 355.1 L672.4 355.0 L673.2 353.4 L674.0 353.0 L674.8 352.6 L675.6 351.0 L676.3 352.0 L677.0 354.0 L677.7 350.9 L678.4 349.0 L679.0 349.4 L679.6 350.0 L680.3 352.4 L681.0 354.0 L681.7 356.2 L682.4 360.0 L683.2 360.6 L684.0 362.0 L684.8 363.7 L685.6 366.0 L686.3 367.7 L687.0 368.0 L687.7 368.9 L688.4 370.0 L689.2 373.2 L690.0 375.0 L690.8 371.8 L691.6 370.0 L692.3 371.2 L693.0 373.0 L693.7 372.3 L694.4 371.0 L695.2 372.3 L696.0 372.0 L696.8 369.9 L697.6 368.0" stroke="#0e6a30" stroke-width="1.15" fill="none" stroke-linejoin="round"/><path d="M458.0 335.0 L458.0 379.0 L458.8 378.8 L459.6 378.0 L460.3 374.6 L461.0 370.0 L462.0 356.0 L463.0 334.0 L463.0 326.0 L463.7 325.4 L464.3 324.5 L465.0 322.0 L466.0 318.0 L466.8 312.1 L467.6 305.0 L468.3 302.6 L469.0 298.0 L470.0 292.0 L471.0 284.0 L471.7 281.3 L472.4 281.0 L473.0 277.4 L473.6 274.0 L474.3 271.0 L475.0 265.6 L476.0 272.0 L477.0 273.0 L478.0 277.0 L478.7 276.1 L479.3 275.4 L480.0 273.0 L481.0 270.4 L481.7 270.6 L482.3 272.7 L483.0 274.0 L483.7 274.3 L484.4 276.0 L485.0 281.1 L485.6 286.0 L486.3 284.2 L487.0 282.0 L488.0 288.0 L489.0 292.0 L490.0 286.0 L490.7 283.7 L491.4 284.0 L492.0 287.8 L492.6 293.0 L493.3 289.4 L494.0 287.0 L495.0 294.0 L495.7 298.6 L496.4 301.0 L497.2 304.7 L498.0 307.0 L498.8 308.4 L499.6 311.6 L500.3 308.1 L501.0 303.0 L501.7 299.6 L502.4 298.0 L503.2 294.3 L504.0 290.0 L505.0 299.0 L505.7 293.7 L506.3 289.0 L507.0 286.0 L507.7 290.5 L508.4 293.0 L509.2 291.2 L510.0 291.0 L511.0 296.0 L511.7 292.3 L512.4 290.0 L513.2 293.3 L514.0 294.0 L514.8 291.0 L515.6 286.0 L516.3 288.0 L517.0 291.0 L518.0 285.0 L519.0 300.0 L520.0 287.0 L520.8 290.2 L521.6 291.0 L522.3 297.6 L523.0 304.0 L523.7 308.0 L524.4 311.0 L525.2 311.7 L526.0 314.0 L526.8 318.1 L527.6 320.0 L528.3 318.0 L529.0 315.0 L530.0 320.0 L530.7 322.9 L531.3 324.4 L532.0 325.0 L533.0 322.0 L534.0 327.0 L534.8 330.0 L535.6 334.0 L536.4 331.0 L537.2 342.0 L538.0 348.0 L538.8 353.6 L539.6 360.0 L540.3 361.6 L541.0 365.0 L542.0 368.0 L543.0 358.0 L544.0 352.0 L544.8 350.1 L545.6 350.0 L546.6 343.0 L547.3 345.4 L548.0 350.0 L548.7 349.8 L549.3 350.9 L550.0 351.0 L550.8 348.7 L551.6 349.0 L552.3 353.0 L553.0 356.0 L553.7 357.6 L554.4 360.0 L555.0 355.5 L555.6 352.0 L556.3 348.8 L557.0 344.0 L557.7 341.3 L558.3 338.2 L559.0 336.0 L559.7 338.5 L560.4 341.0 L561.2 340.5 L562.0 339.0 L562.7 339.5 L563.3 343.6 L564.0 344.0 L564.8 338.8 L565.6 336.0 L566.3 334.6 L567.0 332.0 L568.0 332.0 L568.7 331.2 L569.3 327.4 L570.0 327.0 L570.7 326.2 L571.4 324.0 L572.1 319.7 L572.8 316.0 L573.4 319.2 L574.0 322.0 L574.8 318.7 L575.6 318.0 L576.3 321.3 L577.0 327.0 L577.7 327.2 L578.3 330.2 L579.0 330.0 L579.7 328.2 L580.4 328.0 L581.0 333.7 L581.6 338.0 L582.3 341.6 L583.0 343.0 L583.7 346.1 L584.4 347.0 L585.2 348.1 L586.0 350.0 L586.8 350.6 L587.6 352.0 L588.3 350.6 L589.0 349.0 L589.7 348.7 L590.3 346.0 L591.0 346.0 L591.7 344.6 L592.4 342.0 L593.2 345.3 L594.0 347.0 L594.8 349.4 L595.6 350.0 L596.3 349.3 L597.0 351.0 L597.7 354.7 L598.4 356.0 L599.2 355.9 L600.0 358.0 L600.8 355.1 L601.6 353.0 L602.3 352.3 L603.0 351.0 L603.7 350.6 L604.4 348.0 L605.2 349.1 L606.0 351.0 L606.8 354.1 L607.6 355.0 L608.3 354.6 L609.0 354.0 L610.0 355.0 L610.8 355.5 L611.6 357.0 L612.3 357.5 L613.0 359.0 L613.7 358.7 L614.4 360.0 L615.2 357.9 L616.0 358.0 L616.8 354.6 L617.6 353.0 L618.3 355.5 L619.0 357.0 L619.7 357.3 L620.4 355.0 L621.2 355.6 L622.0 358.0 L622.8 353.8 L623.6 352.0 L624.3 350.3 L625.0 346.0 L625.7 341.1 L626.4 336.0 L627.0 330.8 L627.6 326.0 L628.4 319.0 L629.0 320.3 L629.6 323.0 L630.4 320.0 L631.0 327.2 L631.6 334.0 L632.3 331.8 L633.0 328.0 L634.0 327.0 L635.0 335.0 L636.0 333.0 L637.0 340.0 L637.6 346.0 L638.0 342.0 L639.0 350.0 L640.0 356.0 L641.0 360.0 L642.0 356.0 L642.8 355.4 L643.6 355.0 L644.3 353.8 L645.0 353.0 L645.7 350.3 L646.4 350.0 L647.2 348.6 L648.0 345.0 L648.6 340.3 L649.2 338.0 L649.6 338.0 L650.3 332.5 L651.0 327.0 L652.0 324.0 L653.0 329.0 L654.0 325.0 L654.8 327.4 L655.6 328.0 L656.3 329.5 L657.0 333.0 L657.7 334.1 L658.4 334.0 L659.0 337.2 L659.6 338.0 L660.4 342.0 L661.0 341.3 L661.6 340.0 L662.4 334.0 L663.0 330.7 L663.6 326.0 L664.4 319.0 L665.0 319.5 L665.6 322.0 L666.3 320.8 L667.0 320.0 L668.0 327.0 L669.0 322.0 L669.7 319.1 L670.4 318.0 L671.2 317.9 L672.0 316.0 L672.8 314.5 L673.6 314.0 L674.3 311.9 L675.0 310.0 L675.7 309.8 L676.4 307.0 L677.2 305.6 L678.0 302.4 L679.0 308.0 L680.0 306.0 L681.0 313.0 L681.7 316.7 L682.4 318.0 L683.0 319.9 L683.6 322.0 L684.3 324.0 L685.0 326.0 L685.7 329.6 L686.4 332.0 L687.2 334.4 L688.0 337.0 L688.8 337.5 L689.6 339.0 L690.3 340.7 L691.0 343.0 L691.7 339.6 L692.4 338.0 L693.2 338.7 L694.0 340.0 L694.8 340.8 L695.6 339.0 L696.3 339.2 L697.0 337.0 L698.0 340.0" stroke="#13138c" stroke-width="1.25" fill="none" stroke-linejoin="round"/><text x="452.6" y="410.8" font-size="5" text-anchor="end" fill="#222">0,00</text><text x="452.6" y="399.9" font-size="5" text-anchor="end" fill="#222">0,04</text><text x="452.6" y="389.0" font-size="5" text-anchor="end" fill="#222">0,08</text><text x="452.6" y="378.1" font-size="5" text-anchor="end" fill="#222">0,12</text><text x="452.6" y="367.2" font-size="5" text-anchor="end" fill="#222">0,16</text><text x="452.6" y="356.3" font-size="5" text-anchor="end" fill="#222">0,20</text><text x="452.6" y="345.4" font-size="5" text-anchor="end" fill="#222">0,24</text><text x="452.6" y="334.5" font-size="5" text-anchor="end" fill="#222">0,28</text><text x="452.6" y="323.6" font-size="5" text-anchor="end" fill="#222">0,32</text><text x="452.6" y="312.7" font-size="5" text-anchor="end" fill="#222">0,36</text><text x="452.6" y="301.8" font-size="5" text-anchor="end" fill="#222">0,40</text><text x="452.6" y="290.9" font-size="5" text-anchor="end" fill="#222">0,44</text><text x="452.6" y="280.0" font-size="5" text-anchor="end" fill="#222">0,48</text><text x="452.6" y="269.1" font-size="5" text-anchor="end" fill="#222">0,52</text><text x="457.5" y="418.4" font-size="5" text-anchor="middle" fill="#222">0</text><text x="476.3" y="418.4" font-size="5" text-anchor="middle" fill="#222">40</text><text x="495.1" y="418.4" font-size="5" text-anchor="middle" fill="#222">80</text><text x="514.0" y="418.4" font-size="5" text-anchor="middle" fill="#222">120</text><text x="532.8" y="418.4" font-size="5" text-anchor="middle" fill="#222">160</text><text x="551.6" y="418.4" font-size="5" text-anchor="middle" fill="#222">200</text><text x="570.4" y="418.4" font-size="5" text-anchor="middle" fill="#222">240</text><text x="589.2" y="418.4" font-size="5" text-anchor="middle" fill="#222">280</text><text x="608.1" y="418.4" font-size="5" text-anchor="middle" fill="#222">320</text><text x="626.9" y="418.4" font-size="5" text-anchor="middle" fill="#222">360</text><text x="645.7" y="418.4" font-size="5" text-anchor="middle" fill="#222">400</text><text x="664.5" y="418.4" font-size="5" text-anchor="middle" fill="#222">440</text><text x="683.3" y="418.4" font-size="5" text-anchor="middle" fill="#222">480</text><text x="579" y="425.6" font-size="5" text-anchor="middle" fill="#222">Line [Pixel]</text><text transform="translate(438.6,343) rotate(-90)" font-size="4.8" text-anchor="middle" fill="#222">Intensity [( 3 + cps]</text><rect x="669.2" y="264" width="30.8" height="13" fill="#ffffd0" stroke="#777" stroke-width="0.6"/><rect x="671" y="266.4" width="5.4" height="2.6" fill="#0e6a30"/><rect x="671" y="272" width="5.4" height="2.6" fill="#13138c"/><text x="678" y="269.4" font-size="4.4" fill="#222">Intensity 2</text><text x="678" y="275" font-size="4.4" fill="#222">Intensity 3</text></svg>
</div></body></html>
